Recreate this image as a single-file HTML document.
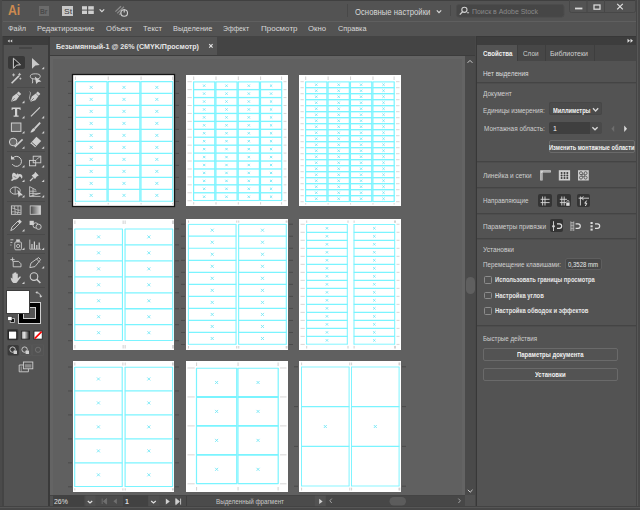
<!DOCTYPE html>
<html><head><meta charset="utf-8"><style>
html,body{margin:0;padding:0;width:640px;height:510px;overflow:hidden;background:#535353;}
body>div{position:absolute;}
.t{position:absolute;font-family:"Liberation Sans", sans-serif;line-height:1;white-space:pre;transform-origin:0 0;}
</style></head><body>
<div style="left:0px;top:0px;width:640px;height:1px;background:#404040;"></div>
<div style="left:0px;top:0px;width:2px;height:510px;background:#4a4a4a;"></div>
<div style="left:2px;top:36px;width:1.5px;height:470px;background:#444444;"></div>
<div style="left:3px;top:21px;width:633px;height:1px;background:#5f5f5f;"></div>
<div style="left:636px;top:0px;width:1px;height:510px;background:#454545;"></div>
<div style="left:637px;top:0px;width:1px;height:510px;background:#575757;"></div>
<div style="left:638px;top:0px;width:2px;height:510px;background:#484848;"></div>
<div style="left:0px;top:506px;width:640px;height:1px;background:#434343;"></div>
<div style="left:0px;top:507px;width:640px;height:1px;background:#565656;"></div>
<div style="left:0px;top:508px;width:640px;height:2px;background:#474747;"></div>
<div style="left:3px;top:36px;width:46px;height:1px;background:#383838;"></div>
<div style="left:3px;top:37px;width:46px;height:8px;background:#3d3d3d;"></div>
<div style="left:19px;top:47px;width:13px;height:2px;background:#454545;"></div>
<div style="left:48px;top:36px;width:2px;height:470px;background:#3a3a3a;"></div>
<div style="left:50px;top:36px;width:425px;height:20px;background:#444444;"></div>
<div style="left:50px;top:37px;width:167px;height:18px;background:#535353;"></div>
<div style="left:50px;top:55px;width:425px;height:1px;background:#3c3c3c;"></div>
<div style="left:50px;top:56px;width:415px;height:439px;background:#646464;"></div>
<div style="left:52.5px;top:58.5px;width:409.5px;height:436.5px;background:#606060;"></div>
<div style="left:465px;top:56px;width:10px;height:439px;background:#4a4a4a;"></div>
<div style="left:466px;top:277px;width:9px;height:17px;background:#5f5f5f;border-radius:5px"></div>
<div style="left:50px;top:495px;width:425px;height:11px;background:#4b4b4b;"></div>
<div style="left:50px;top:495px;width:425px;height:0.6px;background:#444444;"></div>
<div style="left:50px;top:495.6px;width:3px;height:10.6px;background:#525252;"></div>
<div style="left:326px;top:495.6px;width:139px;height:10.6px;background:#474747;"></div>
<div style="left:465px;top:495px;width:10px;height:11px;background:#525252;"></div>
<div style="left:475px;top:36px;width:1px;height:470px;background:#474747;"></div>
<div style="left:476px;top:36px;width:1px;height:470px;background:#383838;"></div>
<div style="left:477px;top:36px;width:159px;height:1px;background:#383838;"></div>
<div style="left:477px;top:37px;width:159px;height:8px;background:#3d3d3d;"></div>
<div style="left:477px;top:45px;width:159px;height:16px;background:#474747;"></div>
<div style="left:477px;top:45px;width:40px;height:16px;background:#535353;"></div>
<div style="left:517px;top:45px;width:1px;height:16px;background:#3e3e3e;"></div>
<div style="left:545px;top:45px;width:1px;height:16px;background:#3e3e3e;"></div>
<div style="left:594px;top:45px;width:1px;height:16px;background:#3e3e3e;"></div>
<div style="left:477px;top:61px;width:159px;height:445px;background:#535353;"></div>
<svg style="position:absolute;left:0;top:0" width="640" height="510" viewBox="0 0 640 510"><g><rect x="72.5" y="74.5" width="102" height="132" fill="#fff" stroke="#151515" stroke-width="1.3"/><path d="M75.30 81.40V201.40M107.03 81.40V201.40" stroke="#7af4ff" stroke-width="1.20" fill="none"/><path d="M75.00 81.60H107.33" stroke="#7af4ff" stroke-width="1.1" fill="none"/><path d="M75.00 93.40H107.33" stroke="#7af4ff" stroke-width="1.35" fill="none"/><path d="M75.00 105.40H107.33" stroke="#7af4ff" stroke-width="1.35" fill="none"/><path d="M75.00 117.40H107.33" stroke="#7af4ff" stroke-width="1.35" fill="none"/><path d="M75.00 129.40H107.33" stroke="#7af4ff" stroke-width="1.35" fill="none"/><path d="M75.00 141.40H107.33" stroke="#7af4ff" stroke-width="1.35" fill="none"/><path d="M75.00 153.40H107.33" stroke="#7af4ff" stroke-width="1.35" fill="none"/><path d="M75.00 165.40H107.33" stroke="#7af4ff" stroke-width="1.35" fill="none"/><path d="M75.00 177.40H107.33" stroke="#7af4ff" stroke-width="1.35" fill="none"/><path d="M75.00 189.40H107.33" stroke="#7af4ff" stroke-width="1.35" fill="none"/><path d="M75.00 201.20H107.33" stroke="#7af4ff" stroke-width="1.1" fill="none"/><path d="M89.67 85.90L92.67 88.90M92.67 85.90L89.67 88.90" stroke="#74e8f6" stroke-width="0.9" fill="none"/><path d="M89.67 97.90L92.67 100.90M92.67 97.90L89.67 100.90" stroke="#74e8f6" stroke-width="0.9" fill="none"/><path d="M89.67 109.90L92.67 112.90M92.67 109.90L89.67 112.90" stroke="#74e8f6" stroke-width="0.9" fill="none"/><path d="M89.67 121.90L92.67 124.90M92.67 121.90L89.67 124.90" stroke="#74e8f6" stroke-width="0.9" fill="none"/><path d="M89.67 133.90L92.67 136.90M92.67 133.90L89.67 136.90" stroke="#74e8f6" stroke-width="0.9" fill="none"/><path d="M89.67 145.90L92.67 148.90M92.67 145.90L89.67 148.90" stroke="#74e8f6" stroke-width="0.9" fill="none"/><path d="M89.67 157.90L92.67 160.90M92.67 157.90L89.67 160.90" stroke="#74e8f6" stroke-width="0.9" fill="none"/><path d="M89.67 169.90L92.67 172.90M92.67 169.90L89.67 172.90" stroke="#74e8f6" stroke-width="0.9" fill="none"/><path d="M89.67 181.90L92.67 184.90M92.67 181.90L89.67 184.90" stroke="#74e8f6" stroke-width="0.9" fill="none"/><path d="M89.67 193.90L92.67 196.90M92.67 193.90L89.67 196.90" stroke="#74e8f6" stroke-width="0.9" fill="none"/><path d="M108.13 81.40V201.40M139.87 81.40V201.40" stroke="#7af4ff" stroke-width="1.20" fill="none"/><path d="M107.83 81.60H140.17" stroke="#7af4ff" stroke-width="1.1" fill="none"/><path d="M107.83 93.40H140.17" stroke="#7af4ff" stroke-width="1.35" fill="none"/><path d="M107.83 105.40H140.17" stroke="#7af4ff" stroke-width="1.35" fill="none"/><path d="M107.83 117.40H140.17" stroke="#7af4ff" stroke-width="1.35" fill="none"/><path d="M107.83 129.40H140.17" stroke="#7af4ff" stroke-width="1.35" fill="none"/><path d="M107.83 141.40H140.17" stroke="#7af4ff" stroke-width="1.35" fill="none"/><path d="M107.83 153.40H140.17" stroke="#7af4ff" stroke-width="1.35" fill="none"/><path d="M107.83 165.40H140.17" stroke="#7af4ff" stroke-width="1.35" fill="none"/><path d="M107.83 177.40H140.17" stroke="#7af4ff" stroke-width="1.35" fill="none"/><path d="M107.83 189.40H140.17" stroke="#7af4ff" stroke-width="1.35" fill="none"/><path d="M107.83 201.20H140.17" stroke="#7af4ff" stroke-width="1.1" fill="none"/><path d="M122.50 85.90L125.50 88.90M125.50 85.90L122.50 88.90" stroke="#74e8f6" stroke-width="0.9" fill="none"/><path d="M122.50 97.90L125.50 100.90M125.50 97.90L122.50 100.90" stroke="#74e8f6" stroke-width="0.9" fill="none"/><path d="M122.50 109.90L125.50 112.90M125.50 109.90L122.50 112.90" stroke="#74e8f6" stroke-width="0.9" fill="none"/><path d="M122.50 121.90L125.50 124.90M125.50 121.90L122.50 124.90" stroke="#74e8f6" stroke-width="0.9" fill="none"/><path d="M122.50 133.90L125.50 136.90M125.50 133.90L122.50 136.90" stroke="#74e8f6" stroke-width="0.9" fill="none"/><path d="M122.50 145.90L125.50 148.90M125.50 145.90L122.50 148.90" stroke="#74e8f6" stroke-width="0.9" fill="none"/><path d="M122.50 157.90L125.50 160.90M125.50 157.90L122.50 160.90" stroke="#74e8f6" stroke-width="0.9" fill="none"/><path d="M122.50 169.90L125.50 172.90M125.50 169.90L122.50 172.90" stroke="#74e8f6" stroke-width="0.9" fill="none"/><path d="M122.50 181.90L125.50 184.90M125.50 181.90L122.50 184.90" stroke="#74e8f6" stroke-width="0.9" fill="none"/><path d="M122.50 193.90L125.50 196.90M125.50 193.90L122.50 196.90" stroke="#74e8f6" stroke-width="0.9" fill="none"/><path d="M140.97 81.40V201.40M172.70 81.40V201.40" stroke="#7af4ff" stroke-width="1.20" fill="none"/><path d="M140.67 81.60H173.00" stroke="#7af4ff" stroke-width="1.1" fill="none"/><path d="M140.67 93.40H173.00" stroke="#7af4ff" stroke-width="1.35" fill="none"/><path d="M140.67 105.40H173.00" stroke="#7af4ff" stroke-width="1.35" fill="none"/><path d="M140.67 117.40H173.00" stroke="#7af4ff" stroke-width="1.35" fill="none"/><path d="M140.67 129.40H173.00" stroke="#7af4ff" stroke-width="1.35" fill="none"/><path d="M140.67 141.40H173.00" stroke="#7af4ff" stroke-width="1.35" fill="none"/><path d="M140.67 153.40H173.00" stroke="#7af4ff" stroke-width="1.35" fill="none"/><path d="M140.67 165.40H173.00" stroke="#7af4ff" stroke-width="1.35" fill="none"/><path d="M140.67 177.40H173.00" stroke="#7af4ff" stroke-width="1.35" fill="none"/><path d="M140.67 189.40H173.00" stroke="#7af4ff" stroke-width="1.35" fill="none"/><path d="M140.67 201.20H173.00" stroke="#7af4ff" stroke-width="1.1" fill="none"/><path d="M155.33 85.90L158.33 88.90M158.33 85.90L155.33 88.90" stroke="#74e8f6" stroke-width="0.9" fill="none"/><path d="M155.33 97.90L158.33 100.90M158.33 97.90L155.33 100.90" stroke="#74e8f6" stroke-width="0.9" fill="none"/><path d="M155.33 109.90L158.33 112.90M158.33 109.90L155.33 112.90" stroke="#74e8f6" stroke-width="0.9" fill="none"/><path d="M155.33 121.90L158.33 124.90M158.33 121.90L155.33 124.90" stroke="#74e8f6" stroke-width="0.9" fill="none"/><path d="M155.33 133.90L158.33 136.90M158.33 133.90L155.33 136.90" stroke="#74e8f6" stroke-width="0.9" fill="none"/><path d="M155.33 145.90L158.33 148.90M158.33 145.90L155.33 148.90" stroke="#74e8f6" stroke-width="0.9" fill="none"/><path d="M155.33 157.90L158.33 160.90M158.33 157.90L155.33 160.90" stroke="#74e8f6" stroke-width="0.9" fill="none"/><path d="M155.33 169.90L158.33 172.90M158.33 169.90L155.33 172.90" stroke="#74e8f6" stroke-width="0.9" fill="none"/><path d="M155.33 181.90L158.33 184.90M158.33 181.90L155.33 184.90" stroke="#74e8f6" stroke-width="0.9" fill="none"/><path d="M155.33 193.90L158.33 196.90M158.33 193.90L155.33 196.90" stroke="#74e8f6" stroke-width="0.9" fill="none"/><path d="M75.40 76.50V79.90M75.40 202.90V204.50M108.23 76.50V79.90M108.23 202.90V204.50M141.07 76.50V79.90M141.07 202.90V204.50M172.60 76.50V79.90M172.60 202.90V204.50" stroke="#b0b0b0" stroke-width="0.6" fill="none"/><path d="M68.00 81.40H72.00M175.00 81.40H179.00M68.00 93.40H72.00M175.00 93.40H179.00M68.00 105.40H72.00M175.00 105.40H179.00M68.00 117.40H72.00M175.00 117.40H179.00M68.00 129.40H72.00M175.00 129.40H179.00M68.00 141.40H72.00M175.00 141.40H179.00M68.00 153.40H72.00M175.00 153.40H179.00M68.00 165.40H72.00M175.00 165.40H179.00M68.00 177.40H72.00M175.00 177.40H179.00M68.00 189.40H72.00M175.00 189.40H179.00M68.00 201.40H72.00M175.00 201.40H179.00" stroke="#484848" stroke-width="0.9" fill="none"/><rect x="186" y="75" width="102" height="131" fill="#fff"/><path d="M193.60 81.70V200.70M214.80 81.70V200.70" stroke="#7af4ff" stroke-width="1.20" fill="none"/><path d="M193.30 81.90H215.10" stroke="#7af4ff" stroke-width="1.1" fill="none"/><path d="M193.30 89.63H215.10" stroke="#7af4ff" stroke-width="1.35" fill="none"/><path d="M193.30 97.57H215.10" stroke="#7af4ff" stroke-width="1.35" fill="none"/><path d="M193.30 105.50H215.10" stroke="#7af4ff" stroke-width="1.35" fill="none"/><path d="M193.30 113.43H215.10" stroke="#7af4ff" stroke-width="1.35" fill="none"/><path d="M193.30 121.37H215.10" stroke="#7af4ff" stroke-width="1.35" fill="none"/><path d="M193.30 129.30H215.10" stroke="#7af4ff" stroke-width="1.35" fill="none"/><path d="M193.30 137.23H215.10" stroke="#7af4ff" stroke-width="1.35" fill="none"/><path d="M193.30 145.17H215.10" stroke="#7af4ff" stroke-width="1.35" fill="none"/><path d="M193.30 153.10H215.10" stroke="#7af4ff" stroke-width="1.35" fill="none"/><path d="M193.30 161.03H215.10" stroke="#7af4ff" stroke-width="1.35" fill="none"/><path d="M193.30 168.97H215.10" stroke="#7af4ff" stroke-width="1.35" fill="none"/><path d="M193.30 176.90H215.10" stroke="#7af4ff" stroke-width="1.35" fill="none"/><path d="M193.30 184.83H215.10" stroke="#7af4ff" stroke-width="1.35" fill="none"/><path d="M193.30 192.77H215.10" stroke="#7af4ff" stroke-width="1.35" fill="none"/><path d="M193.30 200.50H215.10" stroke="#7af4ff" stroke-width="1.1" fill="none"/><path d="M203.05 84.52L205.35 86.82M205.35 84.52L203.05 86.82" stroke="#74e8f6" stroke-width="0.9" fill="none"/><path d="M203.05 92.45L205.35 94.75M205.35 92.45L203.05 94.75" stroke="#74e8f6" stroke-width="0.9" fill="none"/><path d="M203.05 100.38L205.35 102.68M205.35 100.38L203.05 102.68" stroke="#74e8f6" stroke-width="0.9" fill="none"/><path d="M203.05 108.32L205.35 110.62M205.35 108.32L203.05 110.62" stroke="#74e8f6" stroke-width="0.9" fill="none"/><path d="M203.05 116.25L205.35 118.55M205.35 116.25L203.05 118.55" stroke="#74e8f6" stroke-width="0.9" fill="none"/><path d="M203.05 124.18L205.35 126.48M205.35 124.18L203.05 126.48" stroke="#74e8f6" stroke-width="0.9" fill="none"/><path d="M203.05 132.12L205.35 134.42M205.35 132.12L203.05 134.42" stroke="#74e8f6" stroke-width="0.9" fill="none"/><path d="M203.05 140.05L205.35 142.35M205.35 140.05L203.05 142.35" stroke="#74e8f6" stroke-width="0.9" fill="none"/><path d="M203.05 147.98L205.35 150.28M205.35 147.98L203.05 150.28" stroke="#74e8f6" stroke-width="0.9" fill="none"/><path d="M203.05 155.92L205.35 158.22M205.35 155.92L203.05 158.22" stroke="#74e8f6" stroke-width="0.9" fill="none"/><path d="M203.05 163.85L205.35 166.15M205.35 163.85L203.05 166.15" stroke="#74e8f6" stroke-width="0.9" fill="none"/><path d="M203.05 171.78L205.35 174.08M205.35 171.78L203.05 174.08" stroke="#74e8f6" stroke-width="0.9" fill="none"/><path d="M203.05 179.72L205.35 182.02M205.35 179.72L203.05 182.02" stroke="#74e8f6" stroke-width="0.9" fill="none"/><path d="M203.05 187.65L205.35 189.95M205.35 187.65L203.05 189.95" stroke="#74e8f6" stroke-width="0.9" fill="none"/><path d="M203.05 195.58L205.35 197.88M205.35 195.58L203.05 197.88" stroke="#74e8f6" stroke-width="0.9" fill="none"/><path d="M215.90 81.70V200.70M237.10 81.70V200.70" stroke="#7af4ff" stroke-width="1.20" fill="none"/><path d="M215.60 81.90H237.40" stroke="#7af4ff" stroke-width="1.1" fill="none"/><path d="M215.60 89.63H237.40" stroke="#7af4ff" stroke-width="1.35" fill="none"/><path d="M215.60 97.57H237.40" stroke="#7af4ff" stroke-width="1.35" fill="none"/><path d="M215.60 105.50H237.40" stroke="#7af4ff" stroke-width="1.35" fill="none"/><path d="M215.60 113.43H237.40" stroke="#7af4ff" stroke-width="1.35" fill="none"/><path d="M215.60 121.37H237.40" stroke="#7af4ff" stroke-width="1.35" fill="none"/><path d="M215.60 129.30H237.40" stroke="#7af4ff" stroke-width="1.35" fill="none"/><path d="M215.60 137.23H237.40" stroke="#7af4ff" stroke-width="1.35" fill="none"/><path d="M215.60 145.17H237.40" stroke="#7af4ff" stroke-width="1.35" fill="none"/><path d="M215.60 153.10H237.40" stroke="#7af4ff" stroke-width="1.35" fill="none"/><path d="M215.60 161.03H237.40" stroke="#7af4ff" stroke-width="1.35" fill="none"/><path d="M215.60 168.97H237.40" stroke="#7af4ff" stroke-width="1.35" fill="none"/><path d="M215.60 176.90H237.40" stroke="#7af4ff" stroke-width="1.35" fill="none"/><path d="M215.60 184.83H237.40" stroke="#7af4ff" stroke-width="1.35" fill="none"/><path d="M215.60 192.77H237.40" stroke="#7af4ff" stroke-width="1.35" fill="none"/><path d="M215.60 200.50H237.40" stroke="#7af4ff" stroke-width="1.1" fill="none"/><path d="M225.35 84.52L227.65 86.82M227.65 84.52L225.35 86.82" stroke="#74e8f6" stroke-width="0.9" fill="none"/><path d="M225.35 92.45L227.65 94.75M227.65 92.45L225.35 94.75" stroke="#74e8f6" stroke-width="0.9" fill="none"/><path d="M225.35 100.38L227.65 102.68M227.65 100.38L225.35 102.68" stroke="#74e8f6" stroke-width="0.9" fill="none"/><path d="M225.35 108.32L227.65 110.62M227.65 108.32L225.35 110.62" stroke="#74e8f6" stroke-width="0.9" fill="none"/><path d="M225.35 116.25L227.65 118.55M227.65 116.25L225.35 118.55" stroke="#74e8f6" stroke-width="0.9" fill="none"/><path d="M225.35 124.18L227.65 126.48M227.65 124.18L225.35 126.48" stroke="#74e8f6" stroke-width="0.9" fill="none"/><path d="M225.35 132.12L227.65 134.42M227.65 132.12L225.35 134.42" stroke="#74e8f6" stroke-width="0.9" fill="none"/><path d="M225.35 140.05L227.65 142.35M227.65 140.05L225.35 142.35" stroke="#74e8f6" stroke-width="0.9" fill="none"/><path d="M225.35 147.98L227.65 150.28M227.65 147.98L225.35 150.28" stroke="#74e8f6" stroke-width="0.9" fill="none"/><path d="M225.35 155.92L227.65 158.22M227.65 155.92L225.35 158.22" stroke="#74e8f6" stroke-width="0.9" fill="none"/><path d="M225.35 163.85L227.65 166.15M227.65 163.85L225.35 166.15" stroke="#74e8f6" stroke-width="0.9" fill="none"/><path d="M225.35 171.78L227.65 174.08M227.65 171.78L225.35 174.08" stroke="#74e8f6" stroke-width="0.9" fill="none"/><path d="M225.35 179.72L227.65 182.02M227.65 179.72L225.35 182.02" stroke="#74e8f6" stroke-width="0.9" fill="none"/><path d="M225.35 187.65L227.65 189.95M227.65 187.65L225.35 189.95" stroke="#74e8f6" stroke-width="0.9" fill="none"/><path d="M225.35 195.58L227.65 197.88M227.65 195.58L225.35 197.88" stroke="#74e8f6" stroke-width="0.9" fill="none"/><path d="M238.20 81.70V200.70M259.40 81.70V200.70" stroke="#7af4ff" stroke-width="1.20" fill="none"/><path d="M237.90 81.90H259.70" stroke="#7af4ff" stroke-width="1.1" fill="none"/><path d="M237.90 89.63H259.70" stroke="#7af4ff" stroke-width="1.35" fill="none"/><path d="M237.90 97.57H259.70" stroke="#7af4ff" stroke-width="1.35" fill="none"/><path d="M237.90 105.50H259.70" stroke="#7af4ff" stroke-width="1.35" fill="none"/><path d="M237.90 113.43H259.70" stroke="#7af4ff" stroke-width="1.35" fill="none"/><path d="M237.90 121.37H259.70" stroke="#7af4ff" stroke-width="1.35" fill="none"/><path d="M237.90 129.30H259.70" stroke="#7af4ff" stroke-width="1.35" fill="none"/><path d="M237.90 137.23H259.70" stroke="#7af4ff" stroke-width="1.35" fill="none"/><path d="M237.90 145.17H259.70" stroke="#7af4ff" stroke-width="1.35" fill="none"/><path d="M237.90 153.10H259.70" stroke="#7af4ff" stroke-width="1.35" fill="none"/><path d="M237.90 161.03H259.70" stroke="#7af4ff" stroke-width="1.35" fill="none"/><path d="M237.90 168.97H259.70" stroke="#7af4ff" stroke-width="1.35" fill="none"/><path d="M237.90 176.90H259.70" stroke="#7af4ff" stroke-width="1.35" fill="none"/><path d="M237.90 184.83H259.70" stroke="#7af4ff" stroke-width="1.35" fill="none"/><path d="M237.90 192.77H259.70" stroke="#7af4ff" stroke-width="1.35" fill="none"/><path d="M237.90 200.50H259.70" stroke="#7af4ff" stroke-width="1.1" fill="none"/><path d="M247.65 84.52L249.95 86.82M249.95 84.52L247.65 86.82" stroke="#74e8f6" stroke-width="0.9" fill="none"/><path d="M247.65 92.45L249.95 94.75M249.95 92.45L247.65 94.75" stroke="#74e8f6" stroke-width="0.9" fill="none"/><path d="M247.65 100.38L249.95 102.68M249.95 100.38L247.65 102.68" stroke="#74e8f6" stroke-width="0.9" fill="none"/><path d="M247.65 108.32L249.95 110.62M249.95 108.32L247.65 110.62" stroke="#74e8f6" stroke-width="0.9" fill="none"/><path d="M247.65 116.25L249.95 118.55M249.95 116.25L247.65 118.55" stroke="#74e8f6" stroke-width="0.9" fill="none"/><path d="M247.65 124.18L249.95 126.48M249.95 124.18L247.65 126.48" stroke="#74e8f6" stroke-width="0.9" fill="none"/><path d="M247.65 132.12L249.95 134.42M249.95 132.12L247.65 134.42" stroke="#74e8f6" stroke-width="0.9" fill="none"/><path d="M247.65 140.05L249.95 142.35M249.95 140.05L247.65 142.35" stroke="#74e8f6" stroke-width="0.9" fill="none"/><path d="M247.65 147.98L249.95 150.28M249.95 147.98L247.65 150.28" stroke="#74e8f6" stroke-width="0.9" fill="none"/><path d="M247.65 155.92L249.95 158.22M249.95 155.92L247.65 158.22" stroke="#74e8f6" stroke-width="0.9" fill="none"/><path d="M247.65 163.85L249.95 166.15M249.95 163.85L247.65 166.15" stroke="#74e8f6" stroke-width="0.9" fill="none"/><path d="M247.65 171.78L249.95 174.08M249.95 171.78L247.65 174.08" stroke="#74e8f6" stroke-width="0.9" fill="none"/><path d="M247.65 179.72L249.95 182.02M249.95 179.72L247.65 182.02" stroke="#74e8f6" stroke-width="0.9" fill="none"/><path d="M247.65 187.65L249.95 189.95M249.95 187.65L247.65 189.95" stroke="#74e8f6" stroke-width="0.9" fill="none"/><path d="M247.65 195.58L249.95 197.88M249.95 195.58L247.65 197.88" stroke="#74e8f6" stroke-width="0.9" fill="none"/><path d="M260.50 81.70V200.70M281.70 81.70V200.70" stroke="#7af4ff" stroke-width="1.20" fill="none"/><path d="M260.20 81.90H282.00" stroke="#7af4ff" stroke-width="1.1" fill="none"/><path d="M260.20 89.63H282.00" stroke="#7af4ff" stroke-width="1.35" fill="none"/><path d="M260.20 97.57H282.00" stroke="#7af4ff" stroke-width="1.35" fill="none"/><path d="M260.20 105.50H282.00" stroke="#7af4ff" stroke-width="1.35" fill="none"/><path d="M260.20 113.43H282.00" stroke="#7af4ff" stroke-width="1.35" fill="none"/><path d="M260.20 121.37H282.00" stroke="#7af4ff" stroke-width="1.35" fill="none"/><path d="M260.20 129.30H282.00" stroke="#7af4ff" stroke-width="1.35" fill="none"/><path d="M260.20 137.23H282.00" stroke="#7af4ff" stroke-width="1.35" fill="none"/><path d="M260.20 145.17H282.00" stroke="#7af4ff" stroke-width="1.35" fill="none"/><path d="M260.20 153.10H282.00" stroke="#7af4ff" stroke-width="1.35" fill="none"/><path d="M260.20 161.03H282.00" stroke="#7af4ff" stroke-width="1.35" fill="none"/><path d="M260.20 168.97H282.00" stroke="#7af4ff" stroke-width="1.35" fill="none"/><path d="M260.20 176.90H282.00" stroke="#7af4ff" stroke-width="1.35" fill="none"/><path d="M260.20 184.83H282.00" stroke="#7af4ff" stroke-width="1.35" fill="none"/><path d="M260.20 192.77H282.00" stroke="#7af4ff" stroke-width="1.35" fill="none"/><path d="M260.20 200.50H282.00" stroke="#7af4ff" stroke-width="1.1" fill="none"/><path d="M269.95 84.52L272.25 86.82M272.25 84.52L269.95 86.82" stroke="#74e8f6" stroke-width="0.9" fill="none"/><path d="M269.95 92.45L272.25 94.75M272.25 92.45L269.95 94.75" stroke="#74e8f6" stroke-width="0.9" fill="none"/><path d="M269.95 100.38L272.25 102.68M272.25 100.38L269.95 102.68" stroke="#74e8f6" stroke-width="0.9" fill="none"/><path d="M269.95 108.32L272.25 110.62M272.25 108.32L269.95 110.62" stroke="#74e8f6" stroke-width="0.9" fill="none"/><path d="M269.95 116.25L272.25 118.55M272.25 116.25L269.95 118.55" stroke="#74e8f6" stroke-width="0.9" fill="none"/><path d="M269.95 124.18L272.25 126.48M272.25 124.18L269.95 126.48" stroke="#74e8f6" stroke-width="0.9" fill="none"/><path d="M269.95 132.12L272.25 134.42M272.25 132.12L269.95 134.42" stroke="#74e8f6" stroke-width="0.9" fill="none"/><path d="M269.95 140.05L272.25 142.35M272.25 140.05L269.95 142.35" stroke="#74e8f6" stroke-width="0.9" fill="none"/><path d="M269.95 147.98L272.25 150.28M272.25 147.98L269.95 150.28" stroke="#74e8f6" stroke-width="0.9" fill="none"/><path d="M269.95 155.92L272.25 158.22M272.25 155.92L269.95 158.22" stroke="#74e8f6" stroke-width="0.9" fill="none"/><path d="M269.95 163.85L272.25 166.15M272.25 163.85L269.95 166.15" stroke="#74e8f6" stroke-width="0.9" fill="none"/><path d="M269.95 171.78L272.25 174.08M272.25 171.78L269.95 174.08" stroke="#74e8f6" stroke-width="0.9" fill="none"/><path d="M269.95 179.72L272.25 182.02M272.25 179.72L269.95 182.02" stroke="#74e8f6" stroke-width="0.9" fill="none"/><path d="M269.95 187.65L272.25 189.95M272.25 187.65L269.95 189.95" stroke="#74e8f6" stroke-width="0.9" fill="none"/><path d="M269.95 195.58L272.25 197.88M272.25 195.58L269.95 197.88" stroke="#74e8f6" stroke-width="0.9" fill="none"/><path d="M193.70 76.50V80.00M193.70 202.20V204.50M216.00 76.50V80.00M216.00 202.20V204.50M238.30 76.50V80.00M238.30 202.20V204.50M260.60 76.50V80.00M260.60 202.20V204.50M281.60 76.50V80.00M281.60 202.20V204.50" stroke="#b0b0b0" stroke-width="0.6" fill="none"/><path d="M187.50 81.70H191.80M283.50 81.70H286.50M187.50 89.63H191.80M283.50 89.63H286.50M187.50 97.57H191.80M283.50 97.57H286.50M187.50 105.50H191.80M283.50 105.50H286.50M187.50 113.43H191.80M283.50 113.43H286.50M187.50 121.37H191.80M283.50 121.37H286.50M187.50 129.30H191.80M283.50 129.30H286.50M187.50 137.23H191.80M283.50 137.23H286.50M187.50 145.17H191.80M283.50 145.17H286.50M187.50 153.10H191.80M283.50 153.10H286.50M187.50 161.03H191.80M283.50 161.03H286.50M187.50 168.97H191.80M283.50 168.97H286.50M187.50 176.90H191.80M283.50 176.90H286.50M187.50 184.83H191.80M283.50 184.83H286.50M187.50 192.77H191.80M283.50 192.77H286.50M187.50 200.70H191.80M283.50 200.70H286.50" stroke="#c4c4c4" stroke-width="0.7" fill="none"/><rect x="299" y="75" width="102" height="131" fill="#fff"/><path d="M305.60 81.70V201.70M326.93 81.70V201.70" stroke="#7af4ff" stroke-width="1.20" fill="none"/><path d="M305.30 81.90H327.23" stroke="#7af4ff" stroke-width="1.1" fill="none"/><path d="M305.30 87.70H327.23" stroke="#7af4ff" stroke-width="1.35" fill="none"/><path d="M305.30 93.70H327.23" stroke="#7af4ff" stroke-width="1.35" fill="none"/><path d="M305.30 99.70H327.23" stroke="#7af4ff" stroke-width="1.35" fill="none"/><path d="M305.30 105.70H327.23" stroke="#7af4ff" stroke-width="1.35" fill="none"/><path d="M305.30 111.70H327.23" stroke="#7af4ff" stroke-width="1.35" fill="none"/><path d="M305.30 117.70H327.23" stroke="#7af4ff" stroke-width="1.35" fill="none"/><path d="M305.30 123.70H327.23" stroke="#7af4ff" stroke-width="1.35" fill="none"/><path d="M305.30 129.70H327.23" stroke="#7af4ff" stroke-width="1.35" fill="none"/><path d="M305.30 135.70H327.23" stroke="#7af4ff" stroke-width="1.35" fill="none"/><path d="M305.30 141.70H327.23" stroke="#7af4ff" stroke-width="1.35" fill="none"/><path d="M305.30 147.70H327.23" stroke="#7af4ff" stroke-width="1.35" fill="none"/><path d="M305.30 153.70H327.23" stroke="#7af4ff" stroke-width="1.35" fill="none"/><path d="M305.30 159.70H327.23" stroke="#7af4ff" stroke-width="1.35" fill="none"/><path d="M305.30 165.70H327.23" stroke="#7af4ff" stroke-width="1.35" fill="none"/><path d="M305.30 171.70H327.23" stroke="#7af4ff" stroke-width="1.35" fill="none"/><path d="M305.30 177.70H327.23" stroke="#7af4ff" stroke-width="1.35" fill="none"/><path d="M305.30 183.70H327.23" stroke="#7af4ff" stroke-width="1.35" fill="none"/><path d="M305.30 189.70H327.23" stroke="#7af4ff" stroke-width="1.35" fill="none"/><path d="M305.30 195.70H327.23" stroke="#7af4ff" stroke-width="1.35" fill="none"/><path d="M305.30 201.50H327.23" stroke="#7af4ff" stroke-width="1.1" fill="none"/><path d="M315.11 83.55L317.41 85.85M317.41 83.55L315.11 85.85" stroke="#74e8f6" stroke-width="0.9" fill="none"/><path d="M315.11 89.55L317.41 91.85M317.41 89.55L315.11 91.85" stroke="#74e8f6" stroke-width="0.9" fill="none"/><path d="M315.11 95.55L317.41 97.85M317.41 95.55L315.11 97.85" stroke="#74e8f6" stroke-width="0.9" fill="none"/><path d="M315.11 101.55L317.41 103.85M317.41 101.55L315.11 103.85" stroke="#74e8f6" stroke-width="0.9" fill="none"/><path d="M315.11 107.55L317.41 109.85M317.41 107.55L315.11 109.85" stroke="#74e8f6" stroke-width="0.9" fill="none"/><path d="M315.11 113.55L317.41 115.85M317.41 113.55L315.11 115.85" stroke="#74e8f6" stroke-width="0.9" fill="none"/><path d="M315.11 119.55L317.41 121.85M317.41 119.55L315.11 121.85" stroke="#74e8f6" stroke-width="0.9" fill="none"/><path d="M315.11 125.55L317.41 127.85M317.41 125.55L315.11 127.85" stroke="#74e8f6" stroke-width="0.9" fill="none"/><path d="M315.11 131.55L317.41 133.85M317.41 131.55L315.11 133.85" stroke="#74e8f6" stroke-width="0.9" fill="none"/><path d="M315.11 137.55L317.41 139.85M317.41 137.55L315.11 139.85" stroke="#74e8f6" stroke-width="0.9" fill="none"/><path d="M315.11 143.55L317.41 145.85M317.41 143.55L315.11 145.85" stroke="#74e8f6" stroke-width="0.9" fill="none"/><path d="M315.11 149.55L317.41 151.85M317.41 149.55L315.11 151.85" stroke="#74e8f6" stroke-width="0.9" fill="none"/><path d="M315.11 155.55L317.41 157.85M317.41 155.55L315.11 157.85" stroke="#74e8f6" stroke-width="0.9" fill="none"/><path d="M315.11 161.55L317.41 163.85M317.41 161.55L315.11 163.85" stroke="#74e8f6" stroke-width="0.9" fill="none"/><path d="M315.11 167.55L317.41 169.85M317.41 167.55L315.11 169.85" stroke="#74e8f6" stroke-width="0.9" fill="none"/><path d="M315.11 173.55L317.41 175.85M317.41 173.55L315.11 175.85" stroke="#74e8f6" stroke-width="0.9" fill="none"/><path d="M315.11 179.55L317.41 181.85M317.41 179.55L315.11 181.85" stroke="#74e8f6" stroke-width="0.9" fill="none"/><path d="M315.11 185.55L317.41 187.85M317.41 185.55L315.11 187.85" stroke="#74e8f6" stroke-width="0.9" fill="none"/><path d="M315.11 191.55L317.41 193.85M317.41 191.55L315.11 193.85" stroke="#74e8f6" stroke-width="0.9" fill="none"/><path d="M315.11 197.55L317.41 199.85M317.41 197.55L315.11 199.85" stroke="#74e8f6" stroke-width="0.9" fill="none"/><path d="M328.03 81.70V201.70M349.35 81.70V201.70" stroke="#7af4ff" stroke-width="1.20" fill="none"/><path d="M327.73 81.90H349.65" stroke="#7af4ff" stroke-width="1.1" fill="none"/><path d="M327.73 87.70H349.65" stroke="#7af4ff" stroke-width="1.35" fill="none"/><path d="M327.73 93.70H349.65" stroke="#7af4ff" stroke-width="1.35" fill="none"/><path d="M327.73 99.70H349.65" stroke="#7af4ff" stroke-width="1.35" fill="none"/><path d="M327.73 105.70H349.65" stroke="#7af4ff" stroke-width="1.35" fill="none"/><path d="M327.73 111.70H349.65" stroke="#7af4ff" stroke-width="1.35" fill="none"/><path d="M327.73 117.70H349.65" stroke="#7af4ff" stroke-width="1.35" fill="none"/><path d="M327.73 123.70H349.65" stroke="#7af4ff" stroke-width="1.35" fill="none"/><path d="M327.73 129.70H349.65" stroke="#7af4ff" stroke-width="1.35" fill="none"/><path d="M327.73 135.70H349.65" stroke="#7af4ff" stroke-width="1.35" fill="none"/><path d="M327.73 141.70H349.65" stroke="#7af4ff" stroke-width="1.35" fill="none"/><path d="M327.73 147.70H349.65" stroke="#7af4ff" stroke-width="1.35" fill="none"/><path d="M327.73 153.70H349.65" stroke="#7af4ff" stroke-width="1.35" fill="none"/><path d="M327.73 159.70H349.65" stroke="#7af4ff" stroke-width="1.35" fill="none"/><path d="M327.73 165.70H349.65" stroke="#7af4ff" stroke-width="1.35" fill="none"/><path d="M327.73 171.70H349.65" stroke="#7af4ff" stroke-width="1.35" fill="none"/><path d="M327.73 177.70H349.65" stroke="#7af4ff" stroke-width="1.35" fill="none"/><path d="M327.73 183.70H349.65" stroke="#7af4ff" stroke-width="1.35" fill="none"/><path d="M327.73 189.70H349.65" stroke="#7af4ff" stroke-width="1.35" fill="none"/><path d="M327.73 195.70H349.65" stroke="#7af4ff" stroke-width="1.35" fill="none"/><path d="M327.73 201.50H349.65" stroke="#7af4ff" stroke-width="1.1" fill="none"/><path d="M337.54 83.55L339.84 85.85M339.84 83.55L337.54 85.85" stroke="#74e8f6" stroke-width="0.9" fill="none"/><path d="M337.54 89.55L339.84 91.85M339.84 89.55L337.54 91.85" stroke="#74e8f6" stroke-width="0.9" fill="none"/><path d="M337.54 95.55L339.84 97.85M339.84 95.55L337.54 97.85" stroke="#74e8f6" stroke-width="0.9" fill="none"/><path d="M337.54 101.55L339.84 103.85M339.84 101.55L337.54 103.85" stroke="#74e8f6" stroke-width="0.9" fill="none"/><path d="M337.54 107.55L339.84 109.85M339.84 107.55L337.54 109.85" stroke="#74e8f6" stroke-width="0.9" fill="none"/><path d="M337.54 113.55L339.84 115.85M339.84 113.55L337.54 115.85" stroke="#74e8f6" stroke-width="0.9" fill="none"/><path d="M337.54 119.55L339.84 121.85M339.84 119.55L337.54 121.85" stroke="#74e8f6" stroke-width="0.9" fill="none"/><path d="M337.54 125.55L339.84 127.85M339.84 125.55L337.54 127.85" stroke="#74e8f6" stroke-width="0.9" fill="none"/><path d="M337.54 131.55L339.84 133.85M339.84 131.55L337.54 133.85" stroke="#74e8f6" stroke-width="0.9" fill="none"/><path d="M337.54 137.55L339.84 139.85M339.84 137.55L337.54 139.85" stroke="#74e8f6" stroke-width="0.9" fill="none"/><path d="M337.54 143.55L339.84 145.85M339.84 143.55L337.54 145.85" stroke="#74e8f6" stroke-width="0.9" fill="none"/><path d="M337.54 149.55L339.84 151.85M339.84 149.55L337.54 151.85" stroke="#74e8f6" stroke-width="0.9" fill="none"/><path d="M337.54 155.55L339.84 157.85M339.84 155.55L337.54 157.85" stroke="#74e8f6" stroke-width="0.9" fill="none"/><path d="M337.54 161.55L339.84 163.85M339.84 161.55L337.54 163.85" stroke="#74e8f6" stroke-width="0.9" fill="none"/><path d="M337.54 167.55L339.84 169.85M339.84 167.55L337.54 169.85" stroke="#74e8f6" stroke-width="0.9" fill="none"/><path d="M337.54 173.55L339.84 175.85M339.84 173.55L337.54 175.85" stroke="#74e8f6" stroke-width="0.9" fill="none"/><path d="M337.54 179.55L339.84 181.85M339.84 179.55L337.54 181.85" stroke="#74e8f6" stroke-width="0.9" fill="none"/><path d="M337.54 185.55L339.84 187.85M339.84 185.55L337.54 187.85" stroke="#74e8f6" stroke-width="0.9" fill="none"/><path d="M337.54 191.55L339.84 193.85M339.84 191.55L337.54 193.85" stroke="#74e8f6" stroke-width="0.9" fill="none"/><path d="M337.54 197.55L339.84 199.85M339.84 197.55L337.54 199.85" stroke="#74e8f6" stroke-width="0.9" fill="none"/><path d="M350.45 81.70V201.70M371.77 81.70V201.70" stroke="#7af4ff" stroke-width="1.20" fill="none"/><path d="M350.15 81.90H372.07" stroke="#7af4ff" stroke-width="1.1" fill="none"/><path d="M350.15 87.70H372.07" stroke="#7af4ff" stroke-width="1.35" fill="none"/><path d="M350.15 93.70H372.07" stroke="#7af4ff" stroke-width="1.35" fill="none"/><path d="M350.15 99.70H372.07" stroke="#7af4ff" stroke-width="1.35" fill="none"/><path d="M350.15 105.70H372.07" stroke="#7af4ff" stroke-width="1.35" fill="none"/><path d="M350.15 111.70H372.07" stroke="#7af4ff" stroke-width="1.35" fill="none"/><path d="M350.15 117.70H372.07" stroke="#7af4ff" stroke-width="1.35" fill="none"/><path d="M350.15 123.70H372.07" stroke="#7af4ff" stroke-width="1.35" fill="none"/><path d="M350.15 129.70H372.07" stroke="#7af4ff" stroke-width="1.35" fill="none"/><path d="M350.15 135.70H372.07" stroke="#7af4ff" stroke-width="1.35" fill="none"/><path d="M350.15 141.70H372.07" stroke="#7af4ff" stroke-width="1.35" fill="none"/><path d="M350.15 147.70H372.07" stroke="#7af4ff" stroke-width="1.35" fill="none"/><path d="M350.15 153.70H372.07" stroke="#7af4ff" stroke-width="1.35" fill="none"/><path d="M350.15 159.70H372.07" stroke="#7af4ff" stroke-width="1.35" fill="none"/><path d="M350.15 165.70H372.07" stroke="#7af4ff" stroke-width="1.35" fill="none"/><path d="M350.15 171.70H372.07" stroke="#7af4ff" stroke-width="1.35" fill="none"/><path d="M350.15 177.70H372.07" stroke="#7af4ff" stroke-width="1.35" fill="none"/><path d="M350.15 183.70H372.07" stroke="#7af4ff" stroke-width="1.35" fill="none"/><path d="M350.15 189.70H372.07" stroke="#7af4ff" stroke-width="1.35" fill="none"/><path d="M350.15 195.70H372.07" stroke="#7af4ff" stroke-width="1.35" fill="none"/><path d="M350.15 201.50H372.07" stroke="#7af4ff" stroke-width="1.1" fill="none"/><path d="M359.96 83.55L362.26 85.85M362.26 83.55L359.96 85.85" stroke="#74e8f6" stroke-width="0.9" fill="none"/><path d="M359.96 89.55L362.26 91.85M362.26 89.55L359.96 91.85" stroke="#74e8f6" stroke-width="0.9" fill="none"/><path d="M359.96 95.55L362.26 97.85M362.26 95.55L359.96 97.85" stroke="#74e8f6" stroke-width="0.9" fill="none"/><path d="M359.96 101.55L362.26 103.85M362.26 101.55L359.96 103.85" stroke="#74e8f6" stroke-width="0.9" fill="none"/><path d="M359.96 107.55L362.26 109.85M362.26 107.55L359.96 109.85" stroke="#74e8f6" stroke-width="0.9" fill="none"/><path d="M359.96 113.55L362.26 115.85M362.26 113.55L359.96 115.85" stroke="#74e8f6" stroke-width="0.9" fill="none"/><path d="M359.96 119.55L362.26 121.85M362.26 119.55L359.96 121.85" stroke="#74e8f6" stroke-width="0.9" fill="none"/><path d="M359.96 125.55L362.26 127.85M362.26 125.55L359.96 127.85" stroke="#74e8f6" stroke-width="0.9" fill="none"/><path d="M359.96 131.55L362.26 133.85M362.26 131.55L359.96 133.85" stroke="#74e8f6" stroke-width="0.9" fill="none"/><path d="M359.96 137.55L362.26 139.85M362.26 137.55L359.96 139.85" stroke="#74e8f6" stroke-width="0.9" fill="none"/><path d="M359.96 143.55L362.26 145.85M362.26 143.55L359.96 145.85" stroke="#74e8f6" stroke-width="0.9" fill="none"/><path d="M359.96 149.55L362.26 151.85M362.26 149.55L359.96 151.85" stroke="#74e8f6" stroke-width="0.9" fill="none"/><path d="M359.96 155.55L362.26 157.85M362.26 155.55L359.96 157.85" stroke="#74e8f6" stroke-width="0.9" fill="none"/><path d="M359.96 161.55L362.26 163.85M362.26 161.55L359.96 163.85" stroke="#74e8f6" stroke-width="0.9" fill="none"/><path d="M359.96 167.55L362.26 169.85M362.26 167.55L359.96 169.85" stroke="#74e8f6" stroke-width="0.9" fill="none"/><path d="M359.96 173.55L362.26 175.85M362.26 173.55L359.96 175.85" stroke="#74e8f6" stroke-width="0.9" fill="none"/><path d="M359.96 179.55L362.26 181.85M362.26 179.55L359.96 181.85" stroke="#74e8f6" stroke-width="0.9" fill="none"/><path d="M359.96 185.55L362.26 187.85M362.26 185.55L359.96 187.85" stroke="#74e8f6" stroke-width="0.9" fill="none"/><path d="M359.96 191.55L362.26 193.85M362.26 191.55L359.96 193.85" stroke="#74e8f6" stroke-width="0.9" fill="none"/><path d="M359.96 197.55L362.26 199.85M362.26 197.55L359.96 199.85" stroke="#74e8f6" stroke-width="0.9" fill="none"/><path d="M372.88 81.70V201.70M394.20 81.70V201.70" stroke="#7af4ff" stroke-width="1.20" fill="none"/><path d="M372.57 81.90H394.50" stroke="#7af4ff" stroke-width="1.1" fill="none"/><path d="M372.57 87.70H394.50" stroke="#7af4ff" stroke-width="1.35" fill="none"/><path d="M372.57 93.70H394.50" stroke="#7af4ff" stroke-width="1.35" fill="none"/><path d="M372.57 99.70H394.50" stroke="#7af4ff" stroke-width="1.35" fill="none"/><path d="M372.57 105.70H394.50" stroke="#7af4ff" stroke-width="1.35" fill="none"/><path d="M372.57 111.70H394.50" stroke="#7af4ff" stroke-width="1.35" fill="none"/><path d="M372.57 117.70H394.50" stroke="#7af4ff" stroke-width="1.35" fill="none"/><path d="M372.57 123.70H394.50" stroke="#7af4ff" stroke-width="1.35" fill="none"/><path d="M372.57 129.70H394.50" stroke="#7af4ff" stroke-width="1.35" fill="none"/><path d="M372.57 135.70H394.50" stroke="#7af4ff" stroke-width="1.35" fill="none"/><path d="M372.57 141.70H394.50" stroke="#7af4ff" stroke-width="1.35" fill="none"/><path d="M372.57 147.70H394.50" stroke="#7af4ff" stroke-width="1.35" fill="none"/><path d="M372.57 153.70H394.50" stroke="#7af4ff" stroke-width="1.35" fill="none"/><path d="M372.57 159.70H394.50" stroke="#7af4ff" stroke-width="1.35" fill="none"/><path d="M372.57 165.70H394.50" stroke="#7af4ff" stroke-width="1.35" fill="none"/><path d="M372.57 171.70H394.50" stroke="#7af4ff" stroke-width="1.35" fill="none"/><path d="M372.57 177.70H394.50" stroke="#7af4ff" stroke-width="1.35" fill="none"/><path d="M372.57 183.70H394.50" stroke="#7af4ff" stroke-width="1.35" fill="none"/><path d="M372.57 189.70H394.50" stroke="#7af4ff" stroke-width="1.35" fill="none"/><path d="M372.57 195.70H394.50" stroke="#7af4ff" stroke-width="1.35" fill="none"/><path d="M372.57 201.50H394.50" stroke="#7af4ff" stroke-width="1.1" fill="none"/><path d="M382.39 83.55L384.69 85.85M384.69 83.55L382.39 85.85" stroke="#74e8f6" stroke-width="0.9" fill="none"/><path d="M382.39 89.55L384.69 91.85M384.69 89.55L382.39 91.85" stroke="#74e8f6" stroke-width="0.9" fill="none"/><path d="M382.39 95.55L384.69 97.85M384.69 95.55L382.39 97.85" stroke="#74e8f6" stroke-width="0.9" fill="none"/><path d="M382.39 101.55L384.69 103.85M384.69 101.55L382.39 103.85" stroke="#74e8f6" stroke-width="0.9" fill="none"/><path d="M382.39 107.55L384.69 109.85M384.69 107.55L382.39 109.85" stroke="#74e8f6" stroke-width="0.9" fill="none"/><path d="M382.39 113.55L384.69 115.85M384.69 113.55L382.39 115.85" stroke="#74e8f6" stroke-width="0.9" fill="none"/><path d="M382.39 119.55L384.69 121.85M384.69 119.55L382.39 121.85" stroke="#74e8f6" stroke-width="0.9" fill="none"/><path d="M382.39 125.55L384.69 127.85M384.69 125.55L382.39 127.85" stroke="#74e8f6" stroke-width="0.9" fill="none"/><path d="M382.39 131.55L384.69 133.85M384.69 131.55L382.39 133.85" stroke="#74e8f6" stroke-width="0.9" fill="none"/><path d="M382.39 137.55L384.69 139.85M384.69 137.55L382.39 139.85" stroke="#74e8f6" stroke-width="0.9" fill="none"/><path d="M382.39 143.55L384.69 145.85M384.69 143.55L382.39 145.85" stroke="#74e8f6" stroke-width="0.9" fill="none"/><path d="M382.39 149.55L384.69 151.85M384.69 149.55L382.39 151.85" stroke="#74e8f6" stroke-width="0.9" fill="none"/><path d="M382.39 155.55L384.69 157.85M384.69 155.55L382.39 157.85" stroke="#74e8f6" stroke-width="0.9" fill="none"/><path d="M382.39 161.55L384.69 163.85M384.69 161.55L382.39 163.85" stroke="#74e8f6" stroke-width="0.9" fill="none"/><path d="M382.39 167.55L384.69 169.85M384.69 167.55L382.39 169.85" stroke="#74e8f6" stroke-width="0.9" fill="none"/><path d="M382.39 173.55L384.69 175.85M384.69 173.55L382.39 175.85" stroke="#74e8f6" stroke-width="0.9" fill="none"/><path d="M382.39 179.55L384.69 181.85M384.69 179.55L382.39 181.85" stroke="#74e8f6" stroke-width="0.9" fill="none"/><path d="M382.39 185.55L384.69 187.85M384.69 185.55L382.39 187.85" stroke="#74e8f6" stroke-width="0.9" fill="none"/><path d="M382.39 191.55L384.69 193.85M384.69 191.55L382.39 193.85" stroke="#74e8f6" stroke-width="0.9" fill="none"/><path d="M382.39 197.55L384.69 199.85M384.69 197.55L382.39 199.85" stroke="#74e8f6" stroke-width="0.9" fill="none"/><path d="M305.70 76.50V80.00M305.70 203.20V204.50M328.12 76.50V80.00M328.12 203.20V204.50M350.55 76.50V80.00M350.55 203.20V204.50M372.97 76.50V80.00M372.97 203.20V204.50M394.10 76.50V80.00M394.10 203.20V204.50" stroke="#b0b0b0" stroke-width="0.6" fill="none"/><path d="M300.50 81.70H303.80M396.00 81.70H399.50M300.50 87.70H303.80M396.00 87.70H399.50M300.50 93.70H303.80M396.00 93.70H399.50M300.50 99.70H303.80M396.00 99.70H399.50M300.50 105.70H303.80M396.00 105.70H399.50M300.50 111.70H303.80M396.00 111.70H399.50M300.50 117.70H303.80M396.00 117.70H399.50M300.50 123.70H303.80M396.00 123.70H399.50M300.50 129.70H303.80M396.00 129.70H399.50M300.50 135.70H303.80M396.00 135.70H399.50M300.50 141.70H303.80M396.00 141.70H399.50M300.50 147.70H303.80M396.00 147.70H399.50M300.50 153.70H303.80M396.00 153.70H399.50M300.50 159.70H303.80M396.00 159.70H399.50M300.50 165.70H303.80M396.00 165.70H399.50M300.50 171.70H303.80M396.00 171.70H399.50M300.50 177.70H303.80M396.00 177.70H399.50M300.50 183.70H303.80M396.00 183.70H399.50M300.50 189.70H303.80M396.00 189.70H399.50M300.50 195.70H303.80M396.00 195.70H399.50M300.50 201.70H303.80M396.00 201.70H399.50" stroke="#c4c4c4" stroke-width="0.7" fill="none"/><rect x="73" y="219" width="101" height="131" fill="#fff"/><path d="M74.80 228.90V340.70M122.45 228.90V340.70" stroke="#7af4ff" stroke-width="1.14" fill="none"/><path d="M74.50 229.10H122.75" stroke="#7af4ff" stroke-width="1.045" fill="none"/><path d="M74.50 244.87H122.75" stroke="#7af4ff" stroke-width="1.2825" fill="none"/><path d="M74.50 260.84H122.75" stroke="#7af4ff" stroke-width="1.2825" fill="none"/><path d="M74.50 276.81H122.75" stroke="#7af4ff" stroke-width="1.2825" fill="none"/><path d="M74.50 292.79H122.75" stroke="#7af4ff" stroke-width="1.2825" fill="none"/><path d="M74.50 308.76H122.75" stroke="#7af4ff" stroke-width="1.2825" fill="none"/><path d="M74.50 324.73H122.75" stroke="#7af4ff" stroke-width="1.2825" fill="none"/><path d="M74.50 340.50H122.75" stroke="#7af4ff" stroke-width="1.045" fill="none"/><path d="M97.12 235.39L100.12 238.39M100.12 235.39L97.12 238.39" stroke="#74e8f6" stroke-width="0.9" fill="none"/><path d="M97.12 251.36L100.12 254.36M100.12 251.36L97.12 254.36" stroke="#74e8f6" stroke-width="0.9" fill="none"/><path d="M97.12 267.33L100.12 270.33M100.12 267.33L97.12 270.33" stroke="#74e8f6" stroke-width="0.9" fill="none"/><path d="M97.12 283.30L100.12 286.30M100.12 283.30L97.12 286.30" stroke="#74e8f6" stroke-width="0.9" fill="none"/><path d="M97.12 299.27L100.12 302.27M100.12 299.27L97.12 302.27" stroke="#74e8f6" stroke-width="0.9" fill="none"/><path d="M97.12 315.24L100.12 318.24M100.12 315.24L97.12 318.24" stroke="#74e8f6" stroke-width="0.9" fill="none"/><path d="M97.12 331.21L100.12 334.21M100.12 331.21L97.12 334.21" stroke="#74e8f6" stroke-width="0.9" fill="none"/><path d="M125.05 228.90V340.70M172.70 228.90V340.70" stroke="#7af4ff" stroke-width="1.14" fill="none"/><path d="M124.75 229.10H173.00" stroke="#7af4ff" stroke-width="1.045" fill="none"/><path d="M124.75 244.87H173.00" stroke="#7af4ff" stroke-width="1.2825" fill="none"/><path d="M124.75 260.84H173.00" stroke="#7af4ff" stroke-width="1.2825" fill="none"/><path d="M124.75 276.81H173.00" stroke="#7af4ff" stroke-width="1.2825" fill="none"/><path d="M124.75 292.79H173.00" stroke="#7af4ff" stroke-width="1.2825" fill="none"/><path d="M124.75 308.76H173.00" stroke="#7af4ff" stroke-width="1.2825" fill="none"/><path d="M124.75 324.73H173.00" stroke="#7af4ff" stroke-width="1.2825" fill="none"/><path d="M124.75 340.50H173.00" stroke="#7af4ff" stroke-width="1.045" fill="none"/><path d="M147.38 235.39L150.38 238.39M150.38 235.39L147.38 238.39" stroke="#74e8f6" stroke-width="0.9" fill="none"/><path d="M147.38 251.36L150.38 254.36M150.38 251.36L147.38 254.36" stroke="#74e8f6" stroke-width="0.9" fill="none"/><path d="M147.38 267.33L150.38 270.33M150.38 267.33L147.38 270.33" stroke="#74e8f6" stroke-width="0.9" fill="none"/><path d="M147.38 283.30L150.38 286.30M150.38 283.30L147.38 286.30" stroke="#74e8f6" stroke-width="0.9" fill="none"/><path d="M147.38 299.27L150.38 302.27M150.38 299.27L147.38 302.27" stroke="#74e8f6" stroke-width="0.9" fill="none"/><path d="M147.38 315.24L150.38 318.24M150.38 315.24L147.38 318.24" stroke="#74e8f6" stroke-width="0.9" fill="none"/><path d="M147.38 331.21L150.38 334.21M150.38 331.21L147.38 334.21" stroke="#74e8f6" stroke-width="0.9" fill="none"/><path d="M74.90 220.50V224.00M74.90 345.00V348.50M123.15 220.50V224.00M123.15 345.00V348.50M125.15 220.50V224.00M125.15 345.00V348.50M173.40 220.50V224.00M173.40 345.00V348.50M172.60 220.50V224.00M172.60 345.00V348.50" stroke="#b0b0b0" stroke-width="0.6" fill="none"/><path d="M68.00 228.90H72.00M175.00 228.90H179.00M68.00 244.87H72.00M175.00 244.87H179.00M68.00 260.84H72.00M175.00 260.84H179.00M68.00 276.81H72.00M175.00 276.81H179.00M68.00 292.79H72.00M175.00 292.79H179.00M68.00 308.76H72.00M175.00 308.76H179.00M68.00 324.73H72.00M175.00 324.73H179.00M68.00 340.70H72.00M175.00 340.70H179.00" stroke="#484848" stroke-width="0.9" fill="none"/><rect x="186" y="219" width="102" height="131" fill="#fff"/><path d="M188.40 224.20V344.50M236.05 224.20V344.50" stroke="#7af4ff" stroke-width="1.08" fill="none"/><path d="M188.10 224.40H236.35" stroke="#7af4ff" stroke-width="0.9900000000000001" fill="none"/><path d="M188.10 236.23H236.35" stroke="#7af4ff" stroke-width="1.215" fill="none"/><path d="M188.10 248.26H236.35" stroke="#7af4ff" stroke-width="1.215" fill="none"/><path d="M188.10 260.29H236.35" stroke="#7af4ff" stroke-width="1.215" fill="none"/><path d="M188.10 272.32H236.35" stroke="#7af4ff" stroke-width="1.215" fill="none"/><path d="M188.10 284.35H236.35" stroke="#7af4ff" stroke-width="1.215" fill="none"/><path d="M188.10 296.38H236.35" stroke="#7af4ff" stroke-width="1.215" fill="none"/><path d="M188.10 308.41H236.35" stroke="#7af4ff" stroke-width="1.215" fill="none"/><path d="M188.10 320.44H236.35" stroke="#7af4ff" stroke-width="1.215" fill="none"/><path d="M188.10 332.47H236.35" stroke="#7af4ff" stroke-width="1.215" fill="none"/><path d="M188.10 344.30H236.35" stroke="#7af4ff" stroke-width="0.9900000000000001" fill="none"/><path d="M210.73 228.71L213.73 231.71M213.73 228.71L210.73 231.71" stroke="#74e8f6" stroke-width="0.9" fill="none"/><path d="M210.73 240.75L213.73 243.75M213.73 240.75L210.73 243.75" stroke="#74e8f6" stroke-width="0.9" fill="none"/><path d="M210.73 252.77L213.73 255.77M213.73 252.77L210.73 255.77" stroke="#74e8f6" stroke-width="0.9" fill="none"/><path d="M210.73 264.81L213.73 267.81M213.73 264.81L210.73 267.81" stroke="#74e8f6" stroke-width="0.9" fill="none"/><path d="M210.73 276.83L213.73 279.83M213.73 276.83L210.73 279.83" stroke="#74e8f6" stroke-width="0.9" fill="none"/><path d="M210.73 288.87L213.73 291.87M213.73 288.87L210.73 291.87" stroke="#74e8f6" stroke-width="0.9" fill="none"/><path d="M210.73 300.89L213.73 303.89M213.73 300.89L210.73 303.89" stroke="#74e8f6" stroke-width="0.9" fill="none"/><path d="M210.73 312.93L213.73 315.93M213.73 312.93L210.73 315.93" stroke="#74e8f6" stroke-width="0.9" fill="none"/><path d="M210.73 324.95L213.73 327.95M213.73 324.95L210.73 327.95" stroke="#74e8f6" stroke-width="0.9" fill="none"/><path d="M210.73 336.99L213.73 339.99M213.73 336.99L210.73 339.99" stroke="#74e8f6" stroke-width="0.9" fill="none"/><path d="M238.65 224.20V344.50M286.30 224.20V344.50" stroke="#7af4ff" stroke-width="1.08" fill="none"/><path d="M238.35 224.40H286.60" stroke="#7af4ff" stroke-width="0.9900000000000001" fill="none"/><path d="M238.35 236.23H286.60" stroke="#7af4ff" stroke-width="1.215" fill="none"/><path d="M238.35 248.26H286.60" stroke="#7af4ff" stroke-width="1.215" fill="none"/><path d="M238.35 260.29H286.60" stroke="#7af4ff" stroke-width="1.215" fill="none"/><path d="M238.35 272.32H286.60" stroke="#7af4ff" stroke-width="1.215" fill="none"/><path d="M238.35 284.35H286.60" stroke="#7af4ff" stroke-width="1.215" fill="none"/><path d="M238.35 296.38H286.60" stroke="#7af4ff" stroke-width="1.215" fill="none"/><path d="M238.35 308.41H286.60" stroke="#7af4ff" stroke-width="1.215" fill="none"/><path d="M238.35 320.44H286.60" stroke="#7af4ff" stroke-width="1.215" fill="none"/><path d="M238.35 332.47H286.60" stroke="#7af4ff" stroke-width="1.215" fill="none"/><path d="M238.35 344.30H286.60" stroke="#7af4ff" stroke-width="0.9900000000000001" fill="none"/><path d="M260.98 228.71L263.98 231.71M263.98 228.71L260.98 231.71" stroke="#74e8f6" stroke-width="0.9" fill="none"/><path d="M260.98 240.75L263.98 243.75M263.98 240.75L260.98 243.75" stroke="#74e8f6" stroke-width="0.9" fill="none"/><path d="M260.98 252.77L263.98 255.77M263.98 252.77L260.98 255.77" stroke="#74e8f6" stroke-width="0.9" fill="none"/><path d="M260.98 264.81L263.98 267.81M263.98 264.81L260.98 267.81" stroke="#74e8f6" stroke-width="0.9" fill="none"/><path d="M260.98 276.83L263.98 279.83M263.98 276.83L260.98 279.83" stroke="#74e8f6" stroke-width="0.9" fill="none"/><path d="M260.98 288.87L263.98 291.87M263.98 288.87L260.98 291.87" stroke="#74e8f6" stroke-width="0.9" fill="none"/><path d="M260.98 300.89L263.98 303.89M263.98 300.89L260.98 303.89" stroke="#74e8f6" stroke-width="0.9" fill="none"/><path d="M260.98 312.93L263.98 315.93M263.98 312.93L260.98 315.93" stroke="#74e8f6" stroke-width="0.9" fill="none"/><path d="M260.98 324.95L263.98 327.95M263.98 324.95L260.98 327.95" stroke="#74e8f6" stroke-width="0.9" fill="none"/><path d="M260.98 336.99L263.98 339.99M263.98 336.99L260.98 339.99" stroke="#74e8f6" stroke-width="0.9" fill="none"/><path d="M188.50 220.50V222.70M188.50 346.00V348.50M236.75 220.50V222.70M236.75 346.00V348.50M238.75 220.50V222.70M238.75 346.00V348.50M287.00 220.50V222.70M287.00 346.00V348.50M286.20 220.50V222.70M286.20 346.00V348.50" stroke="#b0b0b0" stroke-width="0.6" fill="none"/><path d="M181.00 224.20H185.00M289.00 224.20H293.00M181.00 236.23H185.00M289.00 236.23H293.00M181.00 248.26H185.00M289.00 248.26H293.00M181.00 260.29H185.00M289.00 260.29H293.00M181.00 272.32H185.00M289.00 272.32H293.00M181.00 284.35H185.00M289.00 284.35H293.00M181.00 296.38H185.00M289.00 296.38H293.00M181.00 308.41H185.00M289.00 308.41H293.00M181.00 320.44H185.00M289.00 320.44H293.00M181.00 332.47H185.00M289.00 332.47H293.00M181.00 344.50H185.00M289.00 344.50H293.00" stroke="#484848" stroke-width="0.9" fill="none"/><rect x="299" y="219" width="102" height="131" fill="#fff"/><path d="M306.60 224.30V344.40M347.30 224.30V344.40" stroke="#7af4ff" stroke-width="1.02" fill="none"/><path d="M306.30 224.50H347.60" stroke="#7af4ff" stroke-width="0.935" fill="none"/><path d="M306.30 232.31H347.60" stroke="#7af4ff" stroke-width="1.1475" fill="none"/><path d="M306.30 240.31H347.60" stroke="#7af4ff" stroke-width="1.1475" fill="none"/><path d="M306.30 248.32H347.60" stroke="#7af4ff" stroke-width="1.1475" fill="none"/><path d="M306.30 256.33H347.60" stroke="#7af4ff" stroke-width="1.1475" fill="none"/><path d="M306.30 264.33H347.60" stroke="#7af4ff" stroke-width="1.1475" fill="none"/><path d="M306.30 272.34H347.60" stroke="#7af4ff" stroke-width="1.1475" fill="none"/><path d="M306.30 280.35H347.60" stroke="#7af4ff" stroke-width="1.1475" fill="none"/><path d="M306.30 288.35H347.60" stroke="#7af4ff" stroke-width="1.1475" fill="none"/><path d="M306.30 296.36H347.60" stroke="#7af4ff" stroke-width="1.1475" fill="none"/><path d="M306.30 304.37H347.60" stroke="#7af4ff" stroke-width="1.1475" fill="none"/><path d="M306.30 312.37H347.60" stroke="#7af4ff" stroke-width="1.1475" fill="none"/><path d="M306.30 320.38H347.60" stroke="#7af4ff" stroke-width="1.1475" fill="none"/><path d="M306.30 328.39H347.60" stroke="#7af4ff" stroke-width="1.1475" fill="none"/><path d="M306.30 336.39H347.60" stroke="#7af4ff" stroke-width="1.1475" fill="none"/><path d="M306.30 344.20H347.60" stroke="#7af4ff" stroke-width="0.935" fill="none"/><path d="M325.80 227.15L328.10 229.45M328.10 227.15L325.80 229.45" stroke="#74e8f6" stroke-width="0.9" fill="none"/><path d="M325.80 235.16L328.10 237.46M328.10 235.16L325.80 237.46" stroke="#74e8f6" stroke-width="0.9" fill="none"/><path d="M325.80 243.17L328.10 245.47M328.10 243.17L325.80 245.47" stroke="#74e8f6" stroke-width="0.9" fill="none"/><path d="M325.80 251.17L328.10 253.47M328.10 251.17L325.80 253.47" stroke="#74e8f6" stroke-width="0.9" fill="none"/><path d="M325.80 259.18L328.10 261.48M328.10 259.18L325.80 261.48" stroke="#74e8f6" stroke-width="0.9" fill="none"/><path d="M325.80 267.19L328.10 269.49M328.10 267.19L325.80 269.49" stroke="#74e8f6" stroke-width="0.9" fill="none"/><path d="M325.80 275.19L328.10 277.49M328.10 275.19L325.80 277.49" stroke="#74e8f6" stroke-width="0.9" fill="none"/><path d="M325.80 283.20L328.10 285.50M328.10 283.20L325.80 285.50" stroke="#74e8f6" stroke-width="0.9" fill="none"/><path d="M325.80 291.21L328.10 293.51M328.10 291.21L325.80 293.51" stroke="#74e8f6" stroke-width="0.9" fill="none"/><path d="M325.80 299.21L328.10 301.51M328.10 299.21L325.80 301.51" stroke="#74e8f6" stroke-width="0.9" fill="none"/><path d="M325.80 307.22L328.10 309.52M328.10 307.22L325.80 309.52" stroke="#74e8f6" stroke-width="0.9" fill="none"/><path d="M325.80 315.23L328.10 317.53M328.10 315.23L325.80 317.53" stroke="#74e8f6" stroke-width="0.9" fill="none"/><path d="M325.80 323.23L328.10 325.53M328.10 323.23L325.80 325.53" stroke="#74e8f6" stroke-width="0.9" fill="none"/><path d="M325.80 331.24L328.10 333.54M328.10 331.24L325.80 333.54" stroke="#74e8f6" stroke-width="0.9" fill="none"/><path d="M325.80 339.25L328.10 341.55M328.10 339.25L325.80 341.55" stroke="#74e8f6" stroke-width="0.9" fill="none"/><path d="M354.00 224.30V344.40M394.70 224.30V344.40" stroke="#7af4ff" stroke-width="1.02" fill="none"/><path d="M353.70 224.50H395.00" stroke="#7af4ff" stroke-width="0.935" fill="none"/><path d="M353.70 232.31H395.00" stroke="#7af4ff" stroke-width="1.1475" fill="none"/><path d="M353.70 240.31H395.00" stroke="#7af4ff" stroke-width="1.1475" fill="none"/><path d="M353.70 248.32H395.00" stroke="#7af4ff" stroke-width="1.1475" fill="none"/><path d="M353.70 256.33H395.00" stroke="#7af4ff" stroke-width="1.1475" fill="none"/><path d="M353.70 264.33H395.00" stroke="#7af4ff" stroke-width="1.1475" fill="none"/><path d="M353.70 272.34H395.00" stroke="#7af4ff" stroke-width="1.1475" fill="none"/><path d="M353.70 280.35H395.00" stroke="#7af4ff" stroke-width="1.1475" fill="none"/><path d="M353.70 288.35H395.00" stroke="#7af4ff" stroke-width="1.1475" fill="none"/><path d="M353.70 296.36H395.00" stroke="#7af4ff" stroke-width="1.1475" fill="none"/><path d="M353.70 304.37H395.00" stroke="#7af4ff" stroke-width="1.1475" fill="none"/><path d="M353.70 312.37H395.00" stroke="#7af4ff" stroke-width="1.1475" fill="none"/><path d="M353.70 320.38H395.00" stroke="#7af4ff" stroke-width="1.1475" fill="none"/><path d="M353.70 328.39H395.00" stroke="#7af4ff" stroke-width="1.1475" fill="none"/><path d="M353.70 336.39H395.00" stroke="#7af4ff" stroke-width="1.1475" fill="none"/><path d="M353.70 344.20H395.00" stroke="#7af4ff" stroke-width="0.935" fill="none"/><path d="M373.20 227.15L375.50 229.45M375.50 227.15L373.20 229.45" stroke="#74e8f6" stroke-width="0.9" fill="none"/><path d="M373.20 235.16L375.50 237.46M375.50 235.16L373.20 237.46" stroke="#74e8f6" stroke-width="0.9" fill="none"/><path d="M373.20 243.17L375.50 245.47M375.50 243.17L373.20 245.47" stroke="#74e8f6" stroke-width="0.9" fill="none"/><path d="M373.20 251.17L375.50 253.47M375.50 251.17L373.20 253.47" stroke="#74e8f6" stroke-width="0.9" fill="none"/><path d="M373.20 259.18L375.50 261.48M375.50 259.18L373.20 261.48" stroke="#74e8f6" stroke-width="0.9" fill="none"/><path d="M373.20 267.19L375.50 269.49M375.50 267.19L373.20 269.49" stroke="#74e8f6" stroke-width="0.9" fill="none"/><path d="M373.20 275.19L375.50 277.49M375.50 275.19L373.20 277.49" stroke="#74e8f6" stroke-width="0.9" fill="none"/><path d="M373.20 283.20L375.50 285.50M375.50 283.20L373.20 285.50" stroke="#74e8f6" stroke-width="0.9" fill="none"/><path d="M373.20 291.21L375.50 293.51M375.50 291.21L373.20 293.51" stroke="#74e8f6" stroke-width="0.9" fill="none"/><path d="M373.20 299.21L375.50 301.51M375.50 299.21L373.20 301.51" stroke="#74e8f6" stroke-width="0.9" fill="none"/><path d="M373.20 307.22L375.50 309.52M375.50 307.22L373.20 309.52" stroke="#74e8f6" stroke-width="0.9" fill="none"/><path d="M373.20 315.23L375.50 317.53M375.50 315.23L373.20 317.53" stroke="#74e8f6" stroke-width="0.9" fill="none"/><path d="M373.20 323.23L375.50 325.53M375.50 323.23L373.20 325.53" stroke="#74e8f6" stroke-width="0.9" fill="none"/><path d="M373.20 331.24L375.50 333.54M375.50 331.24L373.20 333.54" stroke="#74e8f6" stroke-width="0.9" fill="none"/><path d="M373.20 339.25L375.50 341.55M375.50 339.25L373.20 341.55" stroke="#74e8f6" stroke-width="0.9" fill="none"/><path d="M306.70 220.50V222.80M306.70 345.90V348.50M348.00 220.50V222.80M348.00 345.90V348.50M354.10 220.50V222.80M354.10 345.90V348.50M395.40 220.50V222.80M395.40 345.90V348.50M394.60 220.50V222.80M394.60 345.90V348.50" stroke="#b0b0b0" stroke-width="0.6" fill="none"/><path d="M300.50 224.30H304.80M396.50 224.30H399.50M300.50 232.31H304.80M396.50 232.31H399.50M300.50 240.31H304.80M396.50 240.31H399.50M300.50 248.32H304.80M396.50 248.32H399.50M300.50 256.33H304.80M396.50 256.33H399.50M300.50 264.33H304.80M396.50 264.33H399.50M300.50 272.34H304.80M396.50 272.34H399.50M300.50 280.35H304.80M396.50 280.35H399.50M300.50 288.35H304.80M396.50 288.35H399.50M300.50 296.36H304.80M396.50 296.36H399.50M300.50 304.37H304.80M396.50 304.37H399.50M300.50 312.37H304.80M396.50 312.37H399.50M300.50 320.38H304.80M396.50 320.38H399.50M300.50 328.39H304.80M396.50 328.39H399.50M300.50 336.39H304.80M396.50 336.39H399.50M300.50 344.40H304.80M396.50 344.40H399.50" stroke="#c4c4c4" stroke-width="0.7" fill="none"/><rect x="73" y="361" width="101" height="131" fill="#fff"/><path d="M74.70 367.00V486.80M122.20 367.00V486.80" stroke="#7af4ff" stroke-width="1.14" fill="none"/><path d="M74.40 367.20H122.50" stroke="#7af4ff" stroke-width="1.045" fill="none"/><path d="M74.40 390.96H122.50" stroke="#7af4ff" stroke-width="1.2825" fill="none"/><path d="M74.40 414.92H122.50" stroke="#7af4ff" stroke-width="1.2825" fill="none"/><path d="M74.40 438.88H122.50" stroke="#7af4ff" stroke-width="1.2825" fill="none"/><path d="M74.40 462.84H122.50" stroke="#7af4ff" stroke-width="1.2825" fill="none"/><path d="M74.40 486.60H122.50" stroke="#7af4ff" stroke-width="1.045" fill="none"/><path d="M96.95 377.48L99.95 380.48M99.95 377.48L96.95 380.48" stroke="#74e8f6" stroke-width="0.9" fill="none"/><path d="M96.95 401.44L99.95 404.44M99.95 401.44L96.95 404.44" stroke="#74e8f6" stroke-width="0.9" fill="none"/><path d="M96.95 425.40L99.95 428.40M99.95 425.40L96.95 428.40" stroke="#74e8f6" stroke-width="0.9" fill="none"/><path d="M96.95 449.36L99.95 452.36M99.95 449.36L96.95 452.36" stroke="#74e8f6" stroke-width="0.9" fill="none"/><path d="M96.95 473.32L99.95 476.32M99.95 473.32L96.95 476.32" stroke="#74e8f6" stroke-width="0.9" fill="none"/><path d="M125.10 367.00V486.80M172.60 367.00V486.80" stroke="#7af4ff" stroke-width="1.14" fill="none"/><path d="M124.80 367.20H172.90" stroke="#7af4ff" stroke-width="1.045" fill="none"/><path d="M124.80 390.96H172.90" stroke="#7af4ff" stroke-width="1.2825" fill="none"/><path d="M124.80 414.92H172.90" stroke="#7af4ff" stroke-width="1.2825" fill="none"/><path d="M124.80 438.88H172.90" stroke="#7af4ff" stroke-width="1.2825" fill="none"/><path d="M124.80 462.84H172.90" stroke="#7af4ff" stroke-width="1.2825" fill="none"/><path d="M124.80 486.60H172.90" stroke="#7af4ff" stroke-width="1.045" fill="none"/><path d="M147.35 377.48L150.35 380.48M150.35 377.48L147.35 380.48" stroke="#74e8f6" stroke-width="0.9" fill="none"/><path d="M147.35 401.44L150.35 404.44M150.35 401.44L147.35 404.44" stroke="#74e8f6" stroke-width="0.9" fill="none"/><path d="M147.35 425.40L150.35 428.40M150.35 425.40L147.35 428.40" stroke="#74e8f6" stroke-width="0.9" fill="none"/><path d="M147.35 449.36L150.35 452.36M150.35 449.36L147.35 452.36" stroke="#74e8f6" stroke-width="0.9" fill="none"/><path d="M147.35 473.32L150.35 476.32M150.35 473.32L147.35 476.32" stroke="#74e8f6" stroke-width="0.9" fill="none"/><path d="M74.80 362.50V365.50M74.80 488.30V490.50M122.90 362.50V365.50M122.90 488.30V490.50M125.20 362.50V365.50M125.20 488.30V490.50M173.30 362.50V365.50M173.30 488.30V490.50M172.50 362.50V365.50M172.50 488.30V490.50" stroke="#b0b0b0" stroke-width="0.6" fill="none"/><path d="M68.00 367.00H72.00M175.00 367.00H179.00M68.00 390.96H72.00M175.00 390.96H179.00M68.00 414.92H72.00M175.00 414.92H179.00M68.00 438.88H72.00M175.00 438.88H179.00M68.00 462.84H72.00M175.00 462.84H179.00M68.00 486.80H72.00M175.00 486.80H179.00" stroke="#484848" stroke-width="0.9" fill="none"/><rect x="186" y="361" width="102" height="131" fill="#fff"/><path d="M196.50 368.00V483.80M236.75 368.00V483.80" stroke="#7af4ff" stroke-width="1.20" fill="none"/><path d="M196.20 368.20H237.05" stroke="#7af4ff" stroke-width="1.1" fill="none"/><path d="M196.20 396.95H237.05" stroke="#7af4ff" stroke-width="1.89" fill="none"/><path d="M196.20 425.90H237.05" stroke="#7af4ff" stroke-width="1.89" fill="none"/><path d="M196.20 454.85H237.05" stroke="#7af4ff" stroke-width="1.89" fill="none"/><path d="M196.20 483.60H237.05" stroke="#7af4ff" stroke-width="1.1" fill="none"/><path d="M215.12 380.98L218.12 383.98M218.12 380.98L215.12 383.98" stroke="#74e8f6" stroke-width="0.9" fill="none"/><path d="M215.12 409.93L218.12 412.93M218.12 409.93L215.12 412.93" stroke="#74e8f6" stroke-width="0.9" fill="none"/><path d="M215.12 438.88L218.12 441.88M218.12 438.88L215.12 441.88" stroke="#74e8f6" stroke-width="0.9" fill="none"/><path d="M215.12 467.83L218.12 470.83M218.12 467.83L215.12 470.83" stroke="#74e8f6" stroke-width="0.9" fill="none"/><path d="M237.95 368.00V483.80M278.20 368.00V483.80" stroke="#7af4ff" stroke-width="1.20" fill="none"/><path d="M237.65 368.20H278.50" stroke="#7af4ff" stroke-width="1.1" fill="none"/><path d="M237.65 396.95H278.50" stroke="#7af4ff" stroke-width="1.89" fill="none"/><path d="M237.65 425.90H278.50" stroke="#7af4ff" stroke-width="1.89" fill="none"/><path d="M237.65 454.85H278.50" stroke="#7af4ff" stroke-width="1.89" fill="none"/><path d="M237.65 483.60H278.50" stroke="#7af4ff" stroke-width="1.1" fill="none"/><path d="M256.57 380.98L259.57 383.98M259.57 380.98L256.57 383.98" stroke="#74e8f6" stroke-width="0.9" fill="none"/><path d="M256.57 409.93L259.57 412.93M259.57 409.93L256.57 412.93" stroke="#74e8f6" stroke-width="0.9" fill="none"/><path d="M256.57 438.88L259.57 441.88M259.57 438.88L256.57 441.88" stroke="#74e8f6" stroke-width="0.9" fill="none"/><path d="M256.57 467.83L259.57 470.83M259.57 467.83L256.57 470.83" stroke="#74e8f6" stroke-width="0.9" fill="none"/><path d="M196.60 362.50V366.00M196.60 487.00V490.50M238.05 362.50V366.00M238.05 487.00V490.50M278.10 362.50V366.00M278.10 487.00V490.50" stroke="#b0b0b0" stroke-width="0.6" fill="none"/><path d="M187.50 368.00H194.70M280.00 368.00H286.50M187.50 396.95H194.70M280.00 396.95H286.50M187.50 425.90H194.70M280.00 425.90H286.50M187.50 454.85H194.70M280.00 454.85H286.50M187.50 483.80H194.70M280.00 483.80H286.50" stroke="#c4c4c4" stroke-width="0.7" fill="none"/><rect x="299" y="361" width="102" height="131" fill="#fff"/><path d="M301.50 366.80V486.20M349.10 366.80V486.20" stroke="#7af4ff" stroke-width="0.96" fill="none"/><path d="M301.20 367.00H349.40" stroke="#7af4ff" stroke-width="0.8800000000000001" fill="none"/><path d="M301.20 406.60H349.40" stroke="#7af4ff" stroke-width="1.08" fill="none"/><path d="M301.20 446.40H349.40" stroke="#7af4ff" stroke-width="1.08" fill="none"/><path d="M301.20 486.00H349.40" stroke="#7af4ff" stroke-width="0.8800000000000001" fill="none"/><path d="M323.80 425.00L326.80 428.00M326.80 425.00L323.80 428.00" stroke="#74e8f6" stroke-width="0.9" fill="none"/><path d="M351.50 366.80V486.20M399.10 366.80V486.20" stroke="#7af4ff" stroke-width="0.96" fill="none"/><path d="M351.20 367.00H399.40" stroke="#7af4ff" stroke-width="0.8800000000000001" fill="none"/><path d="M351.20 406.60H399.40" stroke="#7af4ff" stroke-width="1.08" fill="none"/><path d="M351.20 446.40H399.40" stroke="#7af4ff" stroke-width="1.08" fill="none"/><path d="M351.20 486.00H399.40" stroke="#7af4ff" stroke-width="0.8800000000000001" fill="none"/><path d="M373.80 425.00L376.80 428.00M376.80 425.00L373.80 428.00" stroke="#74e8f6" stroke-width="0.9" fill="none"/><path d="M301.60 362.50V365.30M301.60 487.70V490.50M349.80 362.50V365.30M349.80 487.70V490.50M351.60 362.50V365.30M351.60 487.70V490.50M399.80 362.50V365.30M399.80 487.70V490.50M399.00 362.50V365.30M399.00 487.70V490.50" stroke="#b0b0b0" stroke-width="0.6" fill="none"/><path d="M294.00 366.80H298.00M402.00 366.80H406.00M294.00 406.60H298.00M402.00 406.60H406.00M294.00 446.40H298.00M402.00 446.40H406.00M294.00 486.20H298.00M402.00 486.20H406.00" stroke="#484848" stroke-width="0.9" fill="none"/></g></svg>
<div style="left:477px;top:82px;width:159px;height:1px;background:#444444;"></div>
<div style="left:477px;top:83px;width:159px;height:1px;background:#4d4d4d;"></div>
<div style="left:477px;top:161px;width:159px;height:1px;background:#444444;"></div>
<div style="left:477px;top:162px;width:159px;height:1px;background:#4d4d4d;"></div>
<div style="left:477px;top:187px;width:159px;height:1px;background:#444444;"></div>
<div style="left:477px;top:188px;width:159px;height:1px;background:#4d4d4d;"></div>
<div style="left:477px;top:213px;width:159px;height:1px;background:#444444;"></div>
<div style="left:477px;top:214px;width:159px;height:1px;background:#4d4d4d;"></div>
<div style="left:477px;top:238px;width:159px;height:1px;background:#444444;"></div>
<div style="left:477px;top:239px;width:159px;height:1px;background:#4d4d4d;"></div>
<div style="left:477px;top:325px;width:159px;height:1px;background:#444444;"></div>
<div style="left:477px;top:326px;width:159px;height:1px;background:#4d4d4d;"></div>
<div style="left:548.5px;top:102.3px;width:53px;height:13px;background:#4b4b4b;border-radius:2px;box-shadow:inset 0 0 0 1px #474747"></div>
<div style="left:549px;top:122px;width:40.6px;height:11.5px;background:#3f3f3f;border-radius:2px 0 0 2px"></div>
<div style="left:589.6px;top:122px;width:12px;height:11.5px;background:#4a4a4a;border-radius:0 2px 2px 0"></div>
<div style="left:548.5px;top:140.1px;width:86px;height:12.6px;border:1px solid #6a6a6a;border-radius:2px;box-sizing:border-box"></div>
<div style="left:564.75px;top:257.5px;width:37.25px;height:12px;background:#474747;border-radius:2.5px;box-shadow:inset 0 0 0 1px #5e5e5e"></div>
<div style="left:483.9px;top:275.8px;width:7.8px;height:7.8px;border:1px solid #8c8c8c;border-radius:1.5px;box-sizing:border-box"></div>
<div style="left:483.9px;top:291.6px;width:7.8px;height:7.8px;border:1px solid #8c8c8c;border-radius:1.5px;box-sizing:border-box"></div>
<div style="left:483.9px;top:306.8px;width:7.8px;height:7.8px;border:1px solid #8c8c8c;border-radius:1.5px;box-sizing:border-box"></div>
<div style="left:483px;top:347.5px;width:135px;height:13.5px;border:1px solid #6a6a6a;border-radius:2px;box-sizing:border-box"></div>
<div style="left:483px;top:367.5px;width:135px;height:13.3px;border:1px solid #6a6a6a;border-radius:2px;box-sizing:border-box"></div>
<svg style="position:absolute;left:590px;top:105px;" width="12" height="10" viewBox="0 0 12 10"><path d="M3 3.3L5.6 6L8.2 3.3" stroke="#d9d9d9" stroke-width="1.3" fill="none"/></svg>
<svg style="position:absolute;left:589px;top:124px;" width="12" height="10" viewBox="0 0 12 10"><path d="M3.4 3.2L6 5.8L8.6 3.2" stroke="#d9d9d9" stroke-width="1.3" fill="none"/></svg>
<svg style="position:absolute;left:608px;top:124px;" width="24" height="10" viewBox="0 0 24 10"><path d="M6.2 1.5L3.4 4.7L6.2 7.9Z" fill="#6e6e6e"/><path d="M16.2 1.5L19 4.7L16.2 7.9Z" fill="#dadada"/></svg>
<svg style="position:absolute;left:625px;top:37px;" width="10" height="8" viewBox="0 0 10 8"><path d="M2.5 1.8L5 3.8L2.5 5.8ZM5.5 1.8L8 3.8L5.5 5.8Z" fill="#e0e0e0"/></svg>
<svg style="position:absolute;left:538px;top:168px;" width="54" height="14" viewBox="0 0 54 14"><path d="M2.2 2.2H12.8V4.6H4.6V12.6H2.2Z" fill="#d2d2d2"/><path d="M5.5 3.4H12M3.4 5.5V12" stroke="#6a6a6a" stroke-width="0.8" stroke-dasharray="1 1"/><rect x="20.8" y="2.2" width="11.3" height="10.3" fill="#cfcfcf"/><g fill="#3c3c3c"><circle cx="23.6" cy="4.9" r="1"/><circle cx="26.5" cy="4.9" r="1"/><circle cx="29.3" cy="4.9" r="1"/><circle cx="23.6" cy="7.4" r="1"/><circle cx="26.5" cy="7.4" r="1"/><circle cx="29.3" cy="7.4" r="1"/><circle cx="23.6" cy="9.9" r="1"/><circle cx="26.5" cy="9.9" r="1"/><circle cx="29.3" cy="9.9" r="1"/></g><rect x="40" y="2.2" width="10.8" height="10.3" fill="#cdcdcd"/><g fill="none" stroke="#555" stroke-width="0.9"><circle cx="43" cy="5.2" r="1.5"/><circle cx="47.6" cy="5.2" r="1.5"/><circle cx="43" cy="9.6" r="1.5"/><circle cx="47.6" cy="9.6" r="1.5"/><circle cx="45.3" cy="7.4" r="1.3"/></g></svg>
<div style="left:538.2px;top:194px;width:13.6px;height:12.7px;background:#343434;border-radius:2px"></div>
<div style="left:557.4px;top:194px;width:13.6px;height:12.7px;background:#343434;border-radius:2px"></div>
<div style="left:576.6px;top:194px;width:13.6px;height:12.7px;background:#343434;border-radius:2px"></div>
<svg style="position:absolute;left:538px;top:194px;" width="54" height="14" viewBox="0 0 54 14"><path d="M4.6 2.5V11.5M7 2.5V11.5M2.6 5.3H11.6M2.6 8.6H11.6" stroke="#d8d8d8" stroke-width="0.9"/><path d="M23.8 2.5V11.5M26.2 2.5V11.5M21.8 5.3H29M21.8 8.6H28" stroke="#d8d8d8" stroke-width="0.9"/><rect x="28.2" y="8.6" width="3.4" height="3.2" fill="#dedede"/><path d="M28.9 8.6V7.4A1 1 0 0 1 30.9 7.4V8.6" stroke="#dedede" stroke-width="0.7" fill="none"/><path d="M42.4 2.5V11.5M40.6 4.2H51M43.2 4.2L45.6 2.6M43.2 4.2L45.6 5.8" stroke="#d8d8d8" stroke-width="0.9" fill="none"/><path d="M48.6 6.6L46.8 9.2H48.8L47.4 12" stroke="#e8e8e8" stroke-width="1" fill="none"/></svg>
<div style="left:549.6px;top:219.2px;width:13.1px;height:13.1px;background:#343434;border-radius:2px"></div>
<svg style="position:absolute;left:549px;top:219px;" width="54" height="14" viewBox="0 0 54 14"><path d="M4.5 2.2V12" stroke="#d8d8d8" stroke-width="0.9"/><rect x="3.2" y="6.4" width="2.6" height="1.8" fill="#d8d8d8"/><path d="M8 4.8H10.4A2.3 2.3 0 0 1 10.4 9.4H8" stroke="#e0e0e0" stroke-width="1.2" fill="none"/><path d="M21.8 2.3V12M24.8 2.3V12M21.8 3.5H24.8M21.8 5H24.8M21.8 6.5H24.8M21.8 8H24.8M21.8 9.5H24.8M21.8 11H24.8" stroke="#cfcfcf" stroke-width="0.6"/><path d="M26.6 4.8H29A2.3 2.3 0 0 1 29 9.4H26.6" stroke="#e0e0e0" stroke-width="1.2" fill="none"/><g fill="#dadada"><rect x="41.5" y="3" width="2.2" height="2"/><rect x="41.5" y="6.3" width="2.2" height="2"/><rect x="41.5" y="9.6" width="2.2" height="2"/></g><path d="M46 4.8H48.4A2.3 2.3 0 0 1 48.4 9.4H46" stroke="#e0e0e0" stroke-width="1.2" fill="none"/></svg>
<div style="left:7.5px;top:55.9px;width:17.3px;height:13.4px;background:#383838;border-radius:2px"></div>
<div style="left:7px;top:87px;width:38px;height:1px;background:#4a4a4a;"></div>
<div style="left:7px;top:151px;width:38px;height:1px;background:#4a4a4a;"></div>
<div style="left:7px;top:201px;width:38px;height:1px;background:#4a4a4a;"></div>
<div style="left:7px;top:234px;width:38px;height:1px;background:#4a4a4a;"></div>
<div style="left:7px;top:253px;width:38px;height:1px;background:#4a4a4a;"></div>
<div style="left:7px;top:287px;width:38px;height:1px;background:#4a4a4a;"></div>
<svg style="position:absolute;left:0;top:0" width="640" height="510" viewBox="0 0 640 510"><path d="M44.2 66.7V69.3H41.6Z" fill="#cfcfcf"/><path d="M24.5 100.60000000000001V103.2H21.9Z" fill="#cfcfcf"/><path d="M24.5 115.80000000000001V118.4H21.9Z" fill="#cfcfcf"/><path d="M44.2 115.80000000000001V118.4H41.6Z" fill="#cfcfcf"/><path d="M24.5 131.0V133.6H21.9Z" fill="#cfcfcf"/><path d="M44.2 131.0V133.6H41.6Z" fill="#cfcfcf"/><path d="M24.5 146.20000000000002V148.8H21.9Z" fill="#cfcfcf"/><path d="M44.2 146.20000000000002V148.8H41.6Z" fill="#cfcfcf"/><path d="M24.5 165.0V167.6H21.9Z" fill="#cfcfcf"/><path d="M44.2 165.0V167.6H41.6Z" fill="#cfcfcf"/><path d="M24.5 179.4V182H21.9Z" fill="#cfcfcf"/><path d="M44.2 179.4V182H41.6Z" fill="#cfcfcf"/><path d="M24.5 194.9V197.5H21.9Z" fill="#cfcfcf"/><path d="M44.2 194.9V197.5H41.6Z" fill="#cfcfcf"/><path d="M24.5 228.9V231.5H21.9Z" fill="#cfcfcf"/><path d="M24.5 247.4V250H21.9Z" fill="#cfcfcf"/><path d="M44.2 247.4V250H41.6Z" fill="#cfcfcf"/><path d="M44.2 265.9V268.5H41.6Z" fill="#cfcfcf"/><path d="M24.5 281.4V284H21.9Z" fill="#cfcfcf"/><path d="M13.4 58.2L20.5 64.7L16.4 65.2L13.4 68.4Z" fill="#2c2c2c" stroke="#d0d0d0" stroke-width="1"/><path d="M32 58L39.7 65L35.4 65.4L32 68.7Z" fill="#c9c9c9"/><path d="M11.6 83.3L19 75.9" stroke="#cfcfcf" stroke-width="1.6"/><path d="M13.6 73.4V76.4M12.1 74.9H15.1M19.6 72.9V75.9M18.1 74.4H21.1M20.4 77.6V79.6M19.4 78.6H21.4" stroke="#cfcfcf" stroke-width="0.8"/><ellipse cx="35.3" cy="76.4" rx="5" ry="2.6" fill="none" stroke="#cfcfcf" stroke-width="0.9"/><path d="M33 79C31.5 80 33.5 81.5 32.3 83.3" fill="none" stroke="#cfcfcf" stroke-width="0.9"/><path d="M34.8 76.6L41.4 81.6L38.2 82L36.2 84Z" fill="#cfcfcf"/><path d="M11 101.8L12.6 96.6L16.6 93.6L19.2 96.2L16.2 100.2Z" fill="#cfcfcf"/><path d="M16.8 93.2L18.6 91.4L21.2 94L19.4 95.8Z" fill="#cfcfcf"/><path d="M11.2 101.6L14.6 98.2" stroke="#555" stroke-width="0.7"/><path d="M30.2 101.8L31.8 96.6L35.8 93.6L38.4 96.2L35.4 100.2Z" fill="#cfcfcf"/><path d="M36 93.2L37.8 91.4L40.4 94L38.6 95.8Z" fill="#cfcfcf"/><path d="M30.4 101.6L33.8 98.2" stroke="#555" stroke-width="0.7"/><path d="M29.6 91.6C31.2 92.6 30.2 94.6 29.6 96.6C29 98.8 30.6 100.4 31.6 101" fill="none" stroke="#cfcfcf" stroke-width="0.7"/><path d="M11.6 107.6H20.6V110H19.6V109H17.2V115.6H18.6V116.7H13.6V115.6H15V109H12.6V110H11.6Z" fill="#d2d2d2"/><path d="M30.9 116.3L39.9 107.3" stroke="#cfcfcf" stroke-width="1.2"/><rect x="11.4" y="123" width="9.5" height="8.4" fill="#6a6a6a" stroke="#cfcfcf" stroke-width="1"/><path d="M40.2 122.6L34.6 128.6" stroke="#cfcfcf" stroke-width="1.8"/><path d="M33.8 128L35.4 129.6C34.4 131.6 32.6 132.6 30.4 132.4C31.2 130.6 32 129 33.8 128Z" fill="#cfcfcf"/><circle cx="13.2" cy="142" r="3.8" fill="#6a6a6a" stroke="#cfcfcf" stroke-width="1"/><path d="M14.8 147L22.6 139.4" stroke="#cfcfcf" stroke-width="1.6"/><path d="M30.2 143.6L36.4 136.8L41.2 141L35 147.6Z" fill="#cfcfcf"/><path d="M31.6 142.2L36.2 146.2" stroke="#505050" stroke-width="0.9"/><path d="M30.6 143.8L34.8 147.4" stroke="#3a3a3a" stroke-width="0.6"/><path d="M12.6 158.2A5 5 0 1 1 12.2 164" fill="none" stroke="#cfcfcf" stroke-width="1"/><path d="M11 155.6V159.6H15Z" fill="#cfcfcf"/><rect x="29.5" y="160.4" width="6.2" height="5.4" fill="none" stroke="#cfcfcf" stroke-width="0.9"/><rect x="33.2" y="156.2" width="7.6" height="6.6" fill="none" stroke="#cfcfcf" stroke-width="0.9"/><path d="M36.4 159.6L40.2 156.6" stroke="#cfcfcf" stroke-width="0.8"/><path d="M10.8 180.2L12.6 178.4C12 176.6 11.6 174 13 173C14.4 172 15.8 173.4 16.2 174.8L17.8 173.2L18.8 174.4C20.2 173.6 22.4 174.4 22.4 176.8C22.4 178 21.8 178.8 21.2 178.4C21 177 20.4 176.2 19.4 176.6C18.4 178.6 16.2 180.2 14 179.8L12.2 181Z" fill="#cfcfcf"/><path d="M13.6 176.4L16.4 177.6" stroke="#555" stroke-width="0.6"/><path d="M30 181L33.4 177.6" stroke="#cfcfcf" stroke-width="1.2"/><path d="M31.6 175.6L34.2 173.8L35.2 171.8L38.8 175.4L36.8 176.4L35 179Z" fill="#cfcfcf"/><ellipse cx="15.2" cy="190.6" rx="5" ry="3.6" fill="none" stroke="#cfcfcf" stroke-width="0.9"/><path d="M15.2 187V194.2" stroke="#cfcfcf" stroke-width="0.7"/><path d="M17.4 189.6L23 195.2L20 195.4L18.6 197.4Z" fill="#cfcfcf"/><path d="M29.6 186.6V196.4H40.6M29.6 186.6L36 190M29.6 196.4L40.6 193.2M33 188.4V196.4M29.6 191.2H36.6M29.6 193.4H40" fill="none" stroke="#cfcfcf" stroke-width="0.8"/><rect x="11.4" y="205.9" width="9.6" height="8.4" fill="none" stroke="#cfcfcf" stroke-width="0.9"/><path d="M12 208C15 208 17 211 20.6 210.2M14.6 206C14 209 16 211 15 214M18 206C17.6 209 19 211 17.4 214M11.6 212C14 211 17 213 20.6 212.6" fill="none" stroke="#cfcfcf" stroke-width="0.7"/><defs><linearGradient id="gr" x1="0" x2="1"><stop offset="0" stop-color="#444"/><stop offset="1" stop-color="#d8d8d8"/></linearGradient></defs><rect x="30.2" y="205.9" width="10.4" height="8.4" fill="url(#gr)" stroke="#cfcfcf" stroke-width="0.8"/><path d="M10.8 230.6L12 227L18 221L20 223L14 229Z" fill="none" stroke="#cfcfcf" stroke-width="0.9"/><path d="M17.4 221.6L19.6 219.6L21.8 221.8L19.8 223.8Z" fill="#cfcfcf"/><rect x="29.6" y="220.8" width="4.2" height="4.2" fill="#cfcfcf"/><circle cx="35.6" cy="225.4" r="2.6" fill="none" stroke="#cfcfcf" stroke-width="0.9"/><circle cx="38.6" cy="226.8" r="2.6" fill="#5a5a5a" stroke="#cfcfcf" stroke-width="0.9"/><path d="M10.4 239.8H13.4M10.4 242.4H12.4M10.4 245H11.4" stroke="#cfcfcf" stroke-width="0.9"/><rect x="14.8" y="242" width="6.6" height="7.8" rx="1" fill="none" stroke="#cfcfcf" stroke-width="0.9"/><rect x="16.2" y="239.4" width="3.6" height="2.4" fill="#cfcfcf"/><circle cx="18.1" cy="246" r="1.6" fill="none" stroke="#cfcfcf" stroke-width="0.8"/><path d="M29.8 239.6V249.2H41.2" fill="none" stroke="#cfcfcf" stroke-width="0.8"/><path d="M32 249V244M34.4 249V241.4M36.8 249V245M39.2 249V242.6" stroke="#cfcfcf" stroke-width="1.2"/><path d="M12.6 257.4V261.4M10.4 259.6H14.6" stroke="#cfcfcf" stroke-width="0.9"/><path d="M13.2 261.4H18.6L21 263.8V266.8H13.2Z" fill="none" stroke="#cfcfcf" stroke-width="0.9"/><path d="M29.8 267.6L31 263L38.6 257.6L40.6 259.6L35 266.6Z" fill="none" stroke="#cfcfcf" stroke-width="0.9"/><path d="M36.4 258.8L39.8 262.4" stroke="#cfcfcf" stroke-width="0.8"/><path d="M13.4 283C11.8 281.6 10.6 279.4 10.8 277.4L12.4 278.8V274.2C12.4 273.4 13.6 273.4 13.6 274.2V277.6V273C13.6 272.2 15 272.2 15 273V277.4V272.8C15 272 16.4 272 16.4 272.8V277.4V274C16.4 273.2 17.8 273.2 17.8 274V278.4L19.6 276.6C20.4 276 21.4 276.8 20.6 277.6L17.6 281.4C17 282.4 16.4 283 15.2 283Z" fill="#cfcfcf"/><circle cx="34" cy="276.6" r="3.8" fill="none" stroke="#cfcfcf" stroke-width="1.1"/><path d="M36.8 279.4L40.4 283" stroke="#cfcfcf" stroke-width="1.5"/></svg>
<div style="left:18.4px;top:302px;width:22.7px;height:22.3px;background:#000;box-shadow:inset 0 0 0 1px #cfcfcf"></div>
<div style="left:23.4px;top:307px;width:12.3px;height:12px;border:1px solid #cfcfcf;box-sizing:border-box;background:#535353"></div>
<div style="left:6.9px;top:290.5px;width:22.2px;height:22.3px;background:#fff;box-shadow:0 0 0 1px #3e3e3e"></div>
<svg style="position:absolute;left:0;top:0" width="640" height="510" viewBox="0 0 640 510"><path d="M36 292.4C38.6 292.4 40.8 294.2 40.8 296.8" fill="none" stroke="#cfcfcf" stroke-width="0.9"/><path d="M35.4 292.4L37.4 290.9V293.9Z" fill="#cfcfcf"/><path d="M40.8 297.8L39.2 295.8H42.4Z" fill="#cfcfcf"/><rect x="10.2" y="318.6" width="4.2" height="3.8" fill="#111" stroke="#cfcfcf" stroke-width="0.8"/><rect x="7.8" y="316.6" width="4.2" height="3.8" fill="#fff" stroke="#222" stroke-width="0.5"/><rect x="7" y="329.1" width="11.3" height="11.2" rx="1.5" fill="#3a3a3a"/><rect x="8.6" y="331.1" width="8.1" height="8" fill="#fff" stroke="#111" stroke-width="0.8"/><defs><linearGradient id="g2" x1="0" x2="1"><stop offset="0" stop-color="#888"/><stop offset="0.35" stop-color="#e8e8e8"/><stop offset="1" stop-color="#1a1a1a"/></linearGradient></defs><rect x="21.3" y="331.1" width="8.2" height="8" fill="url(#g2)" stroke="#222" stroke-width="0.8"/><rect x="34" y="331.1" width="8.2" height="8" fill="#fff" stroke="#222" stroke-width="0.8"/><path d="M34.6 338.6L41.6 331.6" stroke="#ff0000" stroke-width="1.6"/><rect x="7.6" y="344.9" width="11.2" height="10.7" rx="1.5" fill="#3a3a3a"/><rect x="20.4" y="344.9" width="11.1" height="10.7" fill="none" stroke="#5a5a5a" stroke-width="0.6"/><rect x="32.6" y="344.9" width="11" height="10.7" fill="none" stroke="#5a5a5a" stroke-width="0.6"/><circle cx="12.6" cy="349.6" r="2.7" fill="none" stroke="#cfcfcf" stroke-width="0.9"/><rect x="13.6" y="350.6" width="3.4" height="3.4" fill="#cfcfcf"/><circle cx="24.6" cy="349.6" r="2.7" fill="none" stroke="#cfcfcf" stroke-width="0.9"/><rect x="25.6" y="350.6" width="3.4" height="3.4" fill="#cfcfcf"/><circle cx="38" cy="349.8" r="2.6" fill="none" stroke="#777" stroke-width="0.8"/><rect x="23.4" y="362" width="9.4" height="6.8" fill="#535353" stroke="#cfcfcf" stroke-width="0.9"/><rect x="24.8" y="364.2" width="6.6" height="3.4" fill="#8a8a8a"/><path d="M23.4 365H19.2V371.8H28.4V368.8" fill="none" stroke="#cfcfcf" stroke-width="0.9"/><path d="M21.2 366.4V371.4" stroke="#cfcfcf" stroke-width="0.6"/><path d="M9.6 39.4L7.6 40.9L9.6 42.4ZM12.2 39.4L10.2 40.9L12.2 42.4Z" fill="#d8d8d8"/></svg>
<div style="left:39px;top:6px;width:10.2px;height:10px;background:#6b6b6b;"></div>
<div style="left:62px;top:6px;width:10.5px;height:10px;background:#c8c8c8;"></div>
<div class="t" style="left:40.4px;top:7.85px;font-size:7.5px;font-weight:700;color:#4a4a4a;transform:scaleX(0.8869);">Br</div>
<div class="t" style="left:63.6px;top:7.85px;font-size:7.5px;font-weight:400;color:#3a3a3a;transform:scaleX(1.1278);">St</div>
<svg style="position:absolute;left:0;top:0" width="640" height="510" viewBox="0 0 640 510"><rect x="82" y="6.2" width="5" height="3.4" fill="#cfcfcf"/><rect x="88.2" y="6.2" width="5.6" height="3.4" fill="#cfcfcf"/><rect x="82" y="10.6" width="5" height="3.4" fill="#cfcfcf"/><rect x="88.2" y="10.6" width="5.6" height="3.4" fill="#cfcfcf"/><path d="M99.6 9.4L101.9 11.7L104.2 9.4" fill="none" stroke="#d8d8d8" stroke-width="1.2"/><path d="M115.4 11.6L121 6.2M117.2 13.4L124 6.8M119.2 14.8L123.8 10.2" stroke="#8c8c8c" stroke-width="1.3"/><circle cx="124.2" cy="13" r="3.3" fill="#535353" stroke="#d0d0d0" stroke-width="1.1"/><path d="M124.2 9.2V12.6" stroke="#d0d0d0" stroke-width="1.1"/><path d="M347.5 4V17M450.5 5V16" stroke="#484848" stroke-width="1"/><path d="M436.8 10.4L439 12.6L441.2 10.4" fill="none" stroke="#d8d8d8" stroke-width="1.2"/><rect x="456.5" y="4.5" width="107.5" height="12.6" rx="2.5" fill="#464646" stroke="#4c4c4c" stroke-width="1"/><circle cx="464.4" cy="9.8" r="2.6" fill="none" stroke="#d0d0d0" stroke-width="1.1"/><path d="M462.6 11.8L459.8 14.6" stroke="#d0d0d0" stroke-width="1.3"/><path d="M466.6 12.2H469.4L468 13.8Z" fill="#d0d0d0"/><path d="M569.5 0V10.5Q569.5 12.5 571.5 12.5H633.5Q635.5 12.5 635.5 10.5V0" fill="none" stroke="#474747" stroke-width="1"/><path d="M587 0V12M604.5 0V12" stroke="#474747" stroke-width="1"/><rect x="575" y="7.6" width="7.4" height="1.8" fill="#d8d8d8"/><rect x="594" y="5" width="6" height="4.2" fill="none" stroke="#d8d8d8" stroke-width="1.3"/><path d="M617.2 3.8L622.8 9.4M622.8 3.8L617.2 9.4" stroke="#e0e0e0" stroke-width="1.2"/><path d="M209.2 44.2L212.6 47.6M212.6 44.2L209.2 47.6" stroke="#e6e6e6" stroke-width="1.1"/><path d="M467.6 62.8L470 60.4L472.4 62.8" fill="none" stroke="#cfcfcf" stroke-width="1"/><path d="M467.8 489.8L470.2 492.2L472.6 489.8" fill="none" stroke="#cfcfcf" stroke-width="1"/><path d="M331.8 498.6L329.8 500.8L331.8 503" fill="none" stroke="#aaaaaa" stroke-width="0.9"/><path d="M458.4 498.6L460.4 500.8L458.4 503" fill="none" stroke="#aaaaaa" stroke-width="0.9"/><rect x="389.5" y="497" width="16.5" height="8.5" rx="4.2" fill="#5c5c5c"/><rect x="53" y="495.6" width="31.3" height="10.6" fill="#424242"/><rect x="85.5" y="495.6" width="10" height="10.6" fill="#505050"/><path d="M87.8 501L90 503L92.2 501" fill="none" stroke="#e0e0e0" stroke-width="1.2"/><path d="M102.2 498.6V504M106.6 498.6L103.4 501.3L106.6 504Z" stroke="#707070" stroke-width="0.9" fill="#707070"/><path d="M116.8 498.6L113.4 501.3L116.8 504Z" fill="#707070"/><rect x="123" y="495.6" width="25" height="10.6" fill="#424242"/><rect x="148.5" y="495.6" width="11" height="10.6" fill="#505050"/><path d="M151.2 501L153.5 503L155.8 501" fill="none" stroke="#e0e0e0" stroke-width="1.2"/><path d="M165.8 498.6L169.8 501.6L165.8 504.6Z" fill="#d0d0d0"/><path d="M175.8 498.6L179.4 501.6L175.8 504.6ZM180.6 498.6V504.6" fill="#d0d0d0" stroke="#d0d0d0" stroke-width="0.9"/><path d="M186.5 496V506" stroke="#3e3e3e" stroke-width="1"/><rect x="314.8" y="495.6" width="11" height="10.6" fill="#525252"/><path d="M319.2 498.8L322.6 501.4L319.2 504Z" fill="#d0d0d0"/></svg>
<div class="t" style="left:8px;top:24.93px;font-size:8px;font-weight:400;color:#d8d8d8;transform:scaleX(0.9150);">Файл</div>
<div class="t" style="left:36.9px;top:24.93px;font-size:8px;font-weight:400;color:#d8d8d8;transform:scaleX(0.9433);">Редактирование</div>
<div class="t" style="left:106.25px;top:24.93px;font-size:8px;font-weight:400;color:#d8d8d8;transform:scaleX(0.9541);">Объект</div>
<div class="t" style="left:143px;top:24.93px;font-size:8px;font-weight:400;color:#d8d8d8;transform:scaleX(0.9434);">Текст</div>
<div class="t" style="left:172.5px;top:24.93px;font-size:8px;font-weight:400;color:#d8d8d8;transform:scaleX(0.9259);">Выделение</div>
<div class="t" style="left:223px;top:24.93px;font-size:8px;font-weight:400;color:#d8d8d8;transform:scaleX(0.8490);">Эффект</div>
<div class="t" style="left:260.5px;top:24.93px;font-size:8px;font-weight:400;color:#d8d8d8;transform:scaleX(0.9987);">Просмотр</div>
<div class="t" style="left:308px;top:24.93px;font-size:8px;font-weight:400;color:#d8d8d8;transform:scaleX(0.9681);">Окно</div>
<div class="t" style="left:337.5px;top:24.93px;font-size:8px;font-weight:400;color:#d8d8d8;transform:scaleX(0.9079);">Справка</div>
<div class="t" style="left:354.6px;top:7.55px;font-size:8.5px;font-weight:400;color:#d8d8d8;transform:scaleX(0.9091);">Основные настройки</div>
<div class="t" style="left:471.5px;top:8.11px;font-size:7.2px;font-weight:400;color:#8a8a8a;transform:scaleX(0.9635);">Поиск в Adobe Stock</div>
<div class="t" style="left:7.5px;top:3.15px;font-size:14px;font-weight:700;color:#cc8a50;transform:scaleX(0.8714);">Ai</div>
<div class="t" style="left:55.9px;top:43.03px;font-size:8px;font-weight:700;color:#e6e6e6;transform:scaleX(0.8888);">Безымянный-1 @ 26% (CMYK/Просмотр)</div>
<div class="t" style="left:482.5px;top:49.81px;font-size:7.2px;font-weight:700;color:#f0f0f0;transform:scaleX(0.8604);">Свойства</div>
<div class="t" style="left:523px;top:49.81px;font-size:7.2px;font-weight:400;color:#cfcfcf;transform:scaleX(0.8865);">Слои</div>
<div class="t" style="left:550px;top:49.81px;font-size:7.2px;font-weight:400;color:#cfcfcf;transform:scaleX(0.9755);">Библиотеки</div>
<div class="t" style="left:482.5px;top:69.97px;font-size:7px;font-weight:400;color:#dcdcdc;transform:scaleX(0.9117);">Нет выделения</div>
<div class="t" style="left:483px;top:90.32px;font-size:7px;font-weight:400;color:#d0d0d0;transform:scaleX(0.9256);">Документ</div>
<div class="t" style="left:483px;top:106.57px;font-size:7px;font-weight:400;color:#d0d0d0;transform:scaleX(0.9006);">Единицы измерения:</div>
<div class="t" style="left:553px;top:107.17px;font-size:7px;font-weight:700;color:#f2f2f2;transform:scaleX(0.8152);">Миллиметры</div>
<div class="t" style="left:484px;top:124.57px;font-size:7px;font-weight:400;color:#d0d0d0;transform:scaleX(0.9103);">Монтажная область:</div>
<div class="t" style="left:553px;top:125.07px;font-size:7px;font-weight:400;color:#f2f2f2;transform:scaleX(1.0000);">1</div>
<div class="t" style="left:549px;top:144.07px;font-size:7px;font-weight:700;color:#f2f2f2;transform:scaleX(0.8071);">Изменить монтажные области</div>
<div class="t" style="left:483px;top:171.57px;font-size:7px;font-weight:400;color:#d0d0d0;transform:scaleX(0.9252);">Линейка и сетки</div>
<div class="t" style="left:483px;top:197.07px;font-size:7px;font-weight:400;color:#d0d0d0;transform:scaleX(0.8960);">Направляющие</div>
<div class="t" style="left:483px;top:222.82px;font-size:7px;font-weight:400;color:#d0d0d0;transform:scaleX(0.9201);">Параметры привязки</div>
<div class="t" style="left:483px;top:245.77px;font-size:7px;font-weight:400;color:#d0d0d0;transform:scaleX(0.9407);">Установки</div>
<div class="t" style="left:483px;top:260.77px;font-size:7px;font-weight:400;color:#d0d0d0;transform:scaleX(0.8911);">Перемещение клавишами:</div>
<div class="t" style="left:568px;top:260.57px;font-size:7px;font-weight:400;color:#e8e8e8;transform:scaleX(0.8564);">0,3528 mm</div>
<div class="t" style="left:495px;top:276.27px;font-size:7px;font-weight:700;color:#e6e6e6;transform:scaleX(0.8277);">Использовать границы просмотра</div>
<div class="t" style="left:495px;top:291.87px;font-size:7px;font-weight:700;color:#e6e6e6;transform:scaleX(0.8407);">Настройка углов</div>
<div class="t" style="left:495px;top:306.87px;font-size:7px;font-weight:700;color:#e6e6e6;transform:scaleX(0.8398);">Настройка обводок и эффектов</div>
<div class="t" style="left:483px;top:334.57px;font-size:7px;font-weight:400;color:#d0d0d0;transform:scaleX(0.8837);">Быстрые действия</div>
<div class="t" style="left:517px;top:351.07px;font-size:7px;font-weight:700;color:#f0f0f0;transform:scaleX(0.8488);">Параметры документа</div>
<div class="t" style="left:534.75px;top:371.37px;font-size:7px;font-weight:700;color:#f0f0f0;transform:scaleX(0.8601);">Установки</div>
<div class="t" style="left:53.6px;top:499.44px;font-size:6.8px;font-weight:400;color:#e0e0e0;transform:scaleX(1.0140);">26%</div>
<div class="t" style="left:125px;top:499.44px;font-size:6.8px;font-weight:700;color:#e0e0e0;transform:scaleX(1.0000);">1</div>
<div class="t" style="left:216.3px;top:499.44px;font-size:6.8px;font-weight:400;color:#c8c8c8;transform:scaleX(0.9224);">Выделенный фрагмент</div>
</body></html>
